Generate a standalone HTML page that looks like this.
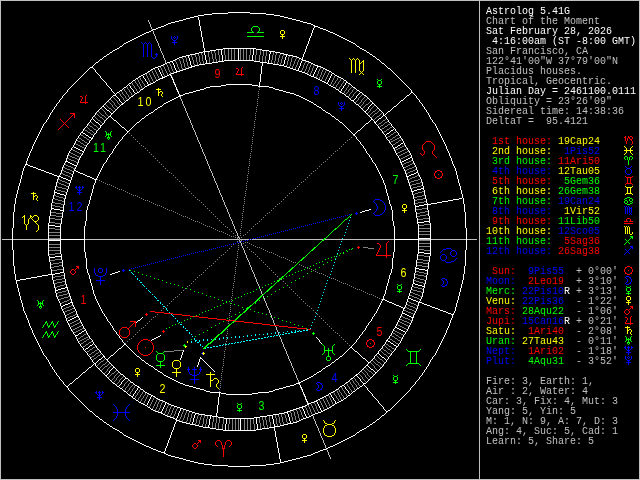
<!DOCTYPE html>
<html><head><meta charset="utf-8"><title>Astrolog 5.41G</title>
<style>
html,body{margin:0;padding:0;background:#000;}
body{width:640px;height:480px;position:relative;overflow:hidden;}
svg{position:absolute;left:0;top:0;will-change:transform;}
path{fill:none;stroke-width:1;shape-rendering:crispEdges;}
#side{position:absolute;left:0;top:0;width:640px;height:480px;will-change:transform;}
.t{position:absolute;left:486px;margin:0;white-space:pre;font:10px/10px "Liberation Mono",monospace;height:10px;color:#c0c0c0;transform:scaleY(1.06);transform-origin:0 0;}
.h{font:12.6px "Liberation Sans",sans-serif;text-anchor:middle;}
.cw{color:#ffffff}
.cl{color:#c0c0c0}
.cr{color:#ff0000}
.cy{color:#ffff00}
.cG{color:#00ff00}
.cb{color:#0000ff}
</style></head><body>
<svg width="640" height="480" viewBox="0 0 640 480"><g transform="translate(0,0.5)">
<path stroke="#ffffff" d="M228 12h22M212 13h16M250 13h16M204 14h8M266 14h8M198 15h6M274 15h6M194 16h4M280 16h4M190 17h4M198 17h1M284 17h4M186 18h4M198 18h1M288 18h4M183 19h3M198 19h1M292 19h4M179 20h4M199 20h1M296 20h4M175 21h4M199 21h1M300 21h3M171 22h4M199 22h1M303 22h4M168 23h3M199 23h1M307 23h4M166 24h2M199 24h1M311 24h2M164 25h2M199 25h1M313 25h2M161 26h3M200 26h1M314 26h4M158 27h3M200 27h1M314 27h1M318 27h2M156 28h2M200 28h1M313 28h1M320 28h3M153 29h3M200 29h1M313 29h1M323 29h3M151 30h2M200 30h1M312 30h1M326 30h2M149 31h2M201 31h1M312 31h1M328 31h2M146 32h3M201 32h1M312 32h1M330 32h3M144 33h2M201 33h1M311 33h1M333 33h2M142 34h2M201 34h1M311 34h1M335 34h2M140 35h2M201 35h1M311 35h1M337 35h2M138 36h2M201 36h1M310 36h1M339 36h2M136 37h2M202 37h1M310 37h1M341 37h2M134 38h2M202 38h1M309 38h1M343 38h2M132 39h2M202 39h1M309 39h1M345 39h2M130 40h2M202 40h1M309 40h1M347 40h2M128 41h2M202 41h1M308 41h1M349 41h2M126 42h2M203 42h1M308 42h1M351 42h2M124 43h2M203 43h1M308 43h1M353 43h2M123 44h1M203 44h1M307 44h1M355 44h1M122 45h1M203 45h1M307 45h1M356 45h1M120 46h2M203 46h1M306 46h1M357 46h2M119 47h1M203 47h1M306 47h1M359 47h1M117 48h2M204 48h1M223 48h33M306 48h1M360 48h2M115 49h2M204 49h1M216 49h7M238 49h1M253 49h1M256 49h6M305 49h1M362 49h2M113 50h2M204 50h1M210 50h6M221 50h1M238 50h1M253 50h1M262 50h7M305 50h1M364 50h2M112 51h1M203 51h7M221 51h1M238 51h1M253 51h1M269 51h6M305 51h1M366 51h1M110 52h2M199 52h4M204 52h1M221 52h1M238 52h1M253 52h1M270 52h1M275 52h5M304 52h1M367 52h2M109 53h1M195 53h4M204 53h1M221 53h1M238 53h1M253 53h1M270 53h1M280 53h4M304 53h1M369 53h1M107 54h2M190 54h5M204 54h1M221 54h1M238 54h1M253 54h1M269 54h1M284 54h4M303 54h1M370 54h2M106 55h1M186 55h4M205 55h1M222 55h1M238 55h1M252 55h1M269 55h1M286 55h1M288 55h5M303 55h1M372 55h1M104 56h2M182 56h4M188 56h1M205 56h1M222 56h1M238 56h1M252 56h1M269 56h1M286 56h1M293 56h4M303 56h1M373 56h2M103 57h1M179 57h3M188 57h1M205 57h1M222 57h1M238 57h1M252 57h1M269 57h1M285 57h1M297 57h2M302 57h1M375 57h1M102 58h1M177 58h2M189 58h1M205 58h1M222 58h1M238 58h1M252 58h1M269 58h1M285 58h1M299 58h2M302 58h1M376 58h1M100 59h2M175 59h2M189 59h1M205 59h1M222 59h1M238 59h1M252 59h1M269 59h1M285 59h1M301 59h2M377 59h2M99 60h1M173 60h2M189 60h1M206 60h1M222 60h1M224 60h30M268 60h1M284 60h1M302 60h4M379 60h1M98 61h1M170 61h3M190 61h1M206 61h1M218 61h6M254 61h6M268 61h1M284 61h1M301 61h1M306 61h3M380 61h1M96 62h2M167 62h3M172 62h1M190 62h1M206 62h1M212 62h6M260 62h7M268 62h1M284 62h1M301 62h1M309 62h2M381 62h1M95 63h1M165 63h2M173 63h1M190 63h1M205 63h7M262 63h1M267 63h6M284 63h1M300 63h1M311 63h2M382 63h2M94 64h1M163 64h2M173 64h1M190 64h1M199 64h6M262 64h1M273 64h6M283 64h1M300 64h1M313 64h2M384 64h1M93 65h1M161 65h2M174 65h1M191 65h1M195 65h4M262 65h1M279 65h5M300 65h1M315 65h3M385 65h1M92 66h1M158 66h3M174 66h1M191 66h4M261 66h1M284 66h3M299 66h1M317 66h4M386 66h1M90 67h3M155 67h3M174 67h1M189 67h3M261 67h1M287 67h3M299 67h1M317 67h1M321 67h2M387 67h1M89 68h1M93 68h1M153 68h2M158 68h1M175 68h1M186 68h3M261 68h1M290 68h3M298 68h1M316 68h1M323 68h2M388 68h2M88 69h1M94 69h1M151 69h2M158 69h1M175 69h1M183 69h3M261 69h1M293 69h3M298 69h1M316 69h1M325 69h2M390 69h1M87 70h1M95 70h1M150 70h1M159 70h1M176 70h1M180 70h3M261 70h1M296 70h3M315 70h1M327 70h2M391 70h1M86 71h1M95 71h1M148 71h2M159 71h1M176 71h4M261 71h1M299 71h3M315 71h1M329 71h2M392 71h1M85 72h1M96 72h1M147 72h1M160 72h1M174 72h3M261 72h1M302 72h3M314 72h1M331 72h1M393 72h1M84 73h1M97 73h1M145 73h2M160 73h1M171 73h3M261 73h1M305 73h2M314 73h1M332 73h2M394 73h1M83 74h1M98 74h1M143 74h2M161 74h1M169 74h2M260 74h1M307 74h2M313 74h1M331 74h1M334 74h1M395 74h1M82 75h1M99 75h1M141 75h2M161 75h1M167 75h2M170 75h1M260 75h1M309 75h2M313 75h1M331 75h1M335 75h2M396 75h1M81 76h1M100 76h1M139 76h2M143 76h1M162 76h1M165 76h2M171 76h1M260 76h1M311 76h3M330 76h1M337 76h2M397 76h1M80 77h1M100 77h1M138 77h1M143 77h1M162 77h3M171 77h1M260 77h1M314 77h2M330 77h1M339 77h2M398 77h1M79 78h1M101 78h1M136 78h2M144 78h1M160 78h3M172 78h1M260 78h1M316 78h2M329 78h1M341 78h2M399 78h1M78 79h1M102 79h1M135 79h1M145 79h1M158 79h2M172 79h1M260 79h1M318 79h2M329 79h1M343 79h1M400 79h1M77 80h1M103 80h1M133 80h2M145 80h1M156 80h2M173 80h1M260 80h1M320 80h2M328 80h1M344 80h2M401 80h1M76 81h1M104 81h1M132 81h1M146 81h1M155 81h1M173 81h1M260 81h1M322 81h2M328 81h1M346 81h1M402 81h1M75 82h1M105 82h1M131 82h1M147 82h1M153 82h2M173 82h1M259 82h1M324 82h2M327 82h1M346 82h2M403 82h1M74 83h1M106 83h1M129 83h2M147 83h1M151 83h2M174 83h1M259 83h1M326 83h2M345 83h1M348 83h2M404 83h1M73 84h1M106 84h1M128 84h1M148 84h3M174 84h1M226 84h26M259 84h1M328 84h1M345 84h1M350 84h1M405 84h1M72 85h1M107 85h1M127 85h1M129 85h1M147 85h2M175 85h1M221 85h5M252 85h6M259 85h1M329 85h2M344 85h1M351 85h1M406 85h1M71 86h1M108 86h1M126 86h1M130 86h1M145 86h2M175 86h1M210 86h11M258 86h11M331 86h2M343 86h1M352 86h1M407 86h1M70 87h1M109 87h1M124 87h2M130 87h1M144 87h1M176 87h1M206 87h4M269 87h4M333 87h2M343 87h1M353 87h2M408 87h1M69 88h1M110 88h1M123 88h1M131 88h1M143 88h1M176 88h1M204 88h2M273 88h2M335 88h1M342 88h1M355 88h1M409 88h1M68 89h1M111 89h1M122 89h1M132 89h1M141 89h2M176 89h1M200 89h4M275 89h4M336 89h2M341 89h1M356 89h1M410 89h1M67 90h1M111 90h1M120 90h2M133 90h1M140 90h1M177 90h1M196 90h4M279 90h4M338 90h1M341 90h1M357 90h2M411 90h1M67 91h1M112 91h1M119 91h1M133 91h1M139 91h1M177 91h1M193 91h3M283 91h3M339 91h2M359 91h1M411 91h1M66 92h1M113 92h1M117 92h2M134 92h1M137 92h2M178 92h1M189 92h4M286 92h4M340 92h2M360 92h2M411 92h2M65 93h1M114 93h1M116 93h1M135 93h2M178 93h1M185 93h4M290 93h4M342 93h2M359 93h1M362 93h1M410 93h1M413 93h1M64 94h1M115 94h1M134 94h1M179 94h1M183 94h2M294 94h2M344 94h1M358 94h1M363 94h1M409 94h1M414 94h1M63 95h1M113 95h3M133 95h1M179 95h4M296 95h3M345 95h1M357 95h1M364 95h2M407 95h2M415 95h1M62 96h1M112 96h1M116 96h1M131 96h2M178 96h2M299 96h2M346 96h2M356 96h1M366 96h1M406 96h1M416 96h1M62 97h1M111 97h1M117 97h1M130 97h1M176 97h2M301 97h2M348 97h1M356 97h1M367 97h1M405 97h1M416 97h1M61 98h1M110 98h1M118 98h1M129 98h1M174 98h2M303 98h2M349 98h1M355 98h1M368 98h1M404 98h1M417 98h1M60 99h1M109 99h1M119 99h1M128 99h1M172 99h2M305 99h2M350 99h1M354 99h1M369 99h1M403 99h1M418 99h1M59 100h1M108 100h1M119 100h1M126 100h2M170 100h2M307 100h2M351 100h3M370 100h1M401 100h2M419 100h1M59 101h1M107 101h1M120 101h1M125 101h1M168 101h2M309 101h2M353 101h1M371 101h1M400 101h1M419 101h1M58 102h1M106 102h1M121 102h1M124 102h1M166 102h2M311 102h2M354 102h1M372 102h1M399 102h1M420 102h1M57 103h1M105 103h1M122 103h2M164 103h2M313 103h1M355 103h1M372 103h2M398 103h1M421 103h1M56 104h1M104 104h1M121 104h2M163 104h1M314 104h2M356 104h2M371 104h1M374 104h1M397 104h1M422 104h1M56 105h1M103 105h1M120 105h1M162 105h1M316 105h1M358 105h1M370 105h1M375 105h1M396 105h1M422 105h1M55 106h1M102 106h2M119 106h1M160 106h2M317 106h2M359 106h1M369 106h1M376 106h1M394 106h2M423 106h1M54 107h1M101 107h1M104 107h1M118 107h1M158 107h2M319 107h2M360 107h1M368 107h1M377 107h1M393 107h1M424 107h1M54 108h1M100 108h1M105 108h1M117 108h1M157 108h1M321 108h1M361 108h1M368 108h1M378 108h1M392 108h1M424 108h1M53 109h1M99 109h1M106 109h1M116 109h1M155 109h2M322 109h1M362 109h1M367 109h1M379 109h1M391 109h1M425 109h1M52 110h1M98 110h1M107 110h2M115 110h1M154 110h1M323 110h2M363 110h1M366 110h1M380 110h1M390 110h1M426 110h1M52 111h1M97 111h1M109 111h1M114 111h1M153 111h1M325 111h1M364 111h2M381 111h1M388 111h2M426 111h1M51 112h1M96 112h1M110 112h1M113 112h1M151 112h2M326 112h2M365 112h1M382 112h1M387 112h1M427 112h1M50 113h1M95 113h1M111 113h2M149 113h2M328 113h2M366 113h1M383 113h1M386 113h1M428 113h1M50 114h1M95 114h1M111 114h1M148 114h1M330 114h1M367 114h1M383 114h1M385 114h1M428 114h1M49 115h1M94 115h1M110 115h1M146 115h2M331 115h1M368 115h1M383 115h2M429 115h1M49 116h1M93 116h1M109 116h2M145 116h1M332 116h2M369 116h1M382 116h1M385 116h1M429 116h1M48 117h1M92 117h1M108 117h1M111 117h1M144 117h1M334 117h1M370 117h1M381 117h1M386 117h1M430 117h1M48 118h1M92 118h1M107 118h1M112 118h1M142 118h2M335 118h1M371 118h1M379 118h2M386 118h1M430 118h1M47 119h1M91 119h1M93 119h1M106 119h1M113 119h1M141 119h1M336 119h2M371 119h2M378 119h1M387 119h1M431 119h1M46 120h1M90 120h1M94 120h1M105 120h1M114 120h2M140 120h1M338 120h1M370 120h1M373 120h1M377 120h1M388 120h1M432 120h1M46 121h1M90 121h1M95 121h1M104 121h1M116 121h1M139 121h1M339 121h1M369 121h1M374 121h1M376 121h1M388 121h1M432 121h1M45 122h1M89 122h1M96 122h2M104 122h1M117 122h1M137 122h2M340 122h2M368 122h1M374 122h2M389 122h1M433 122h1M44 123h1M88 123h1M98 123h1M103 123h1M118 123h1M136 123h1M342 123h1M366 123h2M375 123h1M390 123h1M434 123h1M43 124h1M87 124h1M99 124h1M102 124h1M119 124h1M135 124h1M343 124h1M365 124h1M376 124h1M391 124h1M435 124h1M43 125h1M87 125h1M100 125h2M120 125h1M134 125h1M344 125h1M364 125h1M377 125h1M391 125h1M435 125h1M42 126h1M86 126h1M100 126h1M121 126h1M133 126h1M345 126h1M363 126h1M378 126h1M392 126h1M436 126h1M42 127h1M85 127h1M100 127h1M122 127h2M132 127h1M346 127h1M362 127h1M378 127h1M393 127h1M436 127h1M41 128h1M84 128h1M99 128h1M124 128h1M131 128h1M347 128h1M361 128h1M379 128h1M394 128h1M437 128h1M41 129h1M83 129h1M98 129h1M125 129h1M130 129h1M348 129h1M360 129h1M380 129h1M393 129h1M395 129h1M437 129h1M40 130h1M83 130h1M97 130h1M126 130h1M129 130h1M349 130h1M358 130h2M381 130h1M391 130h2M395 130h1M438 130h1M40 131h1M82 131h1M96 131h1M127 131h2M350 131h1M357 131h1M382 131h1M390 131h1M396 131h1M438 131h1M39 132h1M81 132h2M96 132h1M127 132h1M351 132h1M356 132h1M382 132h1M389 132h1M397 132h1M439 132h1M39 133h1M80 133h1M83 133h2M95 133h1M126 133h1M352 133h1M355 133h1M383 133h1M387 133h2M398 133h1M439 133h1M38 134h1M80 134h1M85 134h1M94 134h1M125 134h1M353 134h2M384 134h1M386 134h1M398 134h1M440 134h1M38 135h1M79 135h1M86 135h2M93 135h1M124 135h1M354 135h1M385 135h1M399 135h1M440 135h1M37 136h1M78 136h1M88 136h1M93 136h1M123 136h1M355 136h1M385 136h1M400 136h1M441 136h1M37 137h1M78 137h1M89 137h2M92 137h1M122 137h1M356 137h1M386 137h1M400 137h1M441 137h1M36 138h1M77 138h1M91 138h2M122 138h1M356 138h1M386 138h1M401 138h1M442 138h1M36 139h1M76 139h1M91 139h1M121 139h1M357 139h1M387 139h1M402 139h1M442 139h1M35 140h1M76 140h1M90 140h1M120 140h1M358 140h1M388 140h1M402 140h1M443 140h1M35 141h1M75 141h1M89 141h1M119 141h1M359 141h1M389 141h1M403 141h1M443 141h1M34 142h1M75 142h1M89 142h1M118 142h1M360 142h1M389 142h1M403 142h1M444 142h1M34 143h1M74 143h1M88 143h1M118 143h1M360 143h1M390 143h1M401 143h2M404 143h1M444 143h1M33 144h1M74 144h1M87 144h1M117 144h1M361 144h1M391 144h1M400 144h1M404 144h1M445 144h1M33 145h1M73 145h1M86 145h1M116 145h1M362 145h1M392 145h1M398 145h2M405 145h1M445 145h1M32 146h1M73 146h1M86 146h1M115 146h1M363 146h1M392 146h1M397 146h1M405 146h1M446 146h1M32 147h1M72 147h1M74 147h2M85 147h1M115 147h1M363 147h1M393 147h1M395 147h2M406 147h1M446 147h1M32 148h1M71 148h1M76 148h2M85 148h1M114 148h1M364 148h1M393 148h2M407 148h1M446 148h1M31 149h1M71 149h1M78 149h2M84 149h1M113 149h1M365 149h1M394 149h1M407 149h1M447 149h1M31 150h1M70 150h1M80 150h2M84 150h1M113 150h1M365 150h1M394 150h1M408 150h1M447 150h1M30 151h1M69 151h1M82 151h2M112 151h1M366 151h1M395 151h1M409 151h1M448 151h1M30 152h1M69 152h1M83 152h1M112 152h1M366 152h1M395 152h1M409 152h1M448 152h1M29 153h1M68 153h1M82 153h1M111 153h1M367 153h1M396 153h1M410 153h1M449 153h1M29 154h1M68 154h1M82 154h1M110 154h1M368 154h1M396 154h1M410 154h1M449 154h1M29 155h1M67 155h1M81 155h1M109 155h1M369 155h1M397 155h1M411 155h1M449 155h1M28 156h1M67 156h1M80 156h1M109 156h1M369 156h1M398 156h1M411 156h1M450 156h1M28 157h1M67 157h1M80 157h1M108 157h1M370 157h1M398 157h1M410 157h2M450 157h1M27 158h1M66 158h1M79 158h1M107 158h1M371 158h1M399 158h1M408 158h2M412 158h1M451 158h1M27 159h1M66 159h1M79 159h1M107 159h1M371 159h1M399 159h1M406 159h2M412 159h1M451 159h1M27 160h1M66 160h1M78 160h1M106 160h1M372 160h1M400 160h1M404 160h2M412 160h1M451 160h1M26 161h1M65 161h3M78 161h1M106 161h1M372 161h1M400 161h1M402 161h2M413 161h1M452 161h1M26 162h1M65 162h1M68 162h2M78 162h1M105 162h1M373 162h1M400 162h2M413 162h1M452 162h1M26 163h1M64 163h1M70 163h2M77 163h1M104 163h1M374 163h1M401 163h1M414 163h1M452 163h1M25 164h3M64 164h1M72 164h2M77 164h1M103 164h1M375 164h1M401 164h1M414 164h1M453 164h1M25 165h1M28 165h2M63 165h1M74 165h3M103 165h1M375 165h1M402 165h1M415 165h1M453 165h1M24 166h1M30 166h3M63 166h1M76 166h1M102 166h1M376 166h1M402 166h1M415 166h1M454 166h1M24 167h1M33 167h3M62 167h1M75 167h1M102 167h1M376 167h1M403 167h1M416 167h1M454 167h1M23 168h1M36 168h2M62 168h1M75 168h1M101 168h1M377 168h1M403 168h1M416 168h1M455 168h1M23 169h1M38 169h3M62 169h1M74 169h1M101 169h1M377 169h1M404 169h1M416 169h1M455 169h1M23 170h1M41 170h3M61 170h1M74 170h2M100 170h1M378 170h1M404 170h1M417 170h1M455 170h1M22 171h1M44 171h2M61 171h1M73 171h1M76 171h2M100 171h1M378 171h1M405 171h1M417 171h1M456 171h1M22 172h1M46 172h3M61 172h1M73 172h1M78 172h2M99 172h1M379 172h1M405 172h1M416 172h2M456 172h1M22 173h1M49 173h3M60 173h1M73 173h1M80 173h3M99 173h1M379 173h1M405 173h1M414 173h2M418 173h1M456 173h1M22 174h1M52 174h2M60 174h1M72 174h1M83 174h2M98 174h1M380 174h1M406 174h1M411 174h3M418 174h1M456 174h1M21 175h1M54 175h3M59 175h1M72 175h1M85 175h2M98 175h1M380 175h1M406 175h1M409 175h2M419 175h1M457 175h1M21 176h1M57 176h4M72 176h1M87 176h3M97 176h1M381 176h1M406 176h3M419 176h1M457 176h1M21 177h1M58 177h1M61 177h2M71 177h1M90 177h2M97 177h1M381 177h1M407 177h1M420 177h1M457 177h1M21 178h1M58 178h1M63 178h3M71 178h1M92 178h2M96 178h1M382 178h1M407 178h1M420 178h1M457 178h1M20 179h1M57 179h1M66 179h2M71 179h1M94 179h3M382 179h1M407 179h1M421 179h1M458 179h1M20 180h1M57 180h1M68 180h3M95 180h1M383 180h1M408 180h1M421 180h1M458 180h1M20 181h1M57 181h1M70 181h1M95 181h1M383 181h1M408 181h1M421 181h1M458 181h1M20 182h1M56 182h1M70 182h1M95 182h1M383 182h1M408 182h1M422 182h1M458 182h1M19 183h1M56 183h1M69 183h1M94 183h1M384 183h1M409 183h1M422 183h1M459 183h1M19 184h1M56 184h1M69 184h1M94 184h1M384 184h1M409 184h1M422 184h1M459 184h1M19 185h1M56 185h1M69 185h1M93 185h1M385 185h1M409 185h1M422 185h1M459 185h1M18 186h1M55 186h1M68 186h1M93 186h1M385 186h1M410 186h1M423 186h1M460 186h1M18 187h1M55 187h1M68 187h1M93 187h1M385 187h1M410 187h1M423 187h1M460 187h1M18 188h1M55 188h1M68 188h1M93 188h1M385 188h1M410 188h1M421 188h3M460 188h1M18 189h1M55 189h1M67 189h1M92 189h1M386 189h1M411 189h1M417 189h4M423 189h1M460 189h1M17 190h1M54 190h1M67 190h1M92 190h1M386 190h1M411 190h1M414 190h3M424 190h1M461 190h1M17 191h1M54 191h1M67 191h1M92 191h1M386 191h1M411 191h3M424 191h1M461 191h1M17 192h1M54 192h3M66 192h1M92 192h1M386 192h1M412 192h1M424 192h1M461 192h1M17 193h1M54 193h1M57 193h3M66 193h1M91 193h1M387 193h1M412 193h1M424 193h1M461 193h1M16 194h1M54 194h1M60 194h4M66 194h1M91 194h1M387 194h1M412 194h1M424 194h1M462 194h1M16 195h1M53 195h1M64 195h2M91 195h1M387 195h1M413 195h1M425 195h1M462 195h1M16 196h1M53 196h1M65 196h1M90 196h1M388 196h1M413 196h1M425 196h1M462 196h1M16 197h1M53 197h1M65 197h1M90 197h1M388 197h1M413 197h1M425 197h1M462 197h1M15 198h1M53 198h1M65 198h1M90 198h1M388 198h1M413 198h1M425 198h1M459 198h3M463 198h1M15 199h1M52 199h1M64 199h1M90 199h1M388 199h1M414 199h1M426 199h1M453 199h6M463 199h1M15 200h1M52 200h1M64 200h1M89 200h1M389 200h1M414 200h1M426 200h1M448 200h5M463 200h1M15 201h1M52 201h1M64 201h1M89 201h1M389 201h1M414 201h1M426 201h1M442 201h6M463 201h1M15 202h1M52 202h1M64 202h1M89 202h1M389 202h1M414 202h1M426 202h1M437 202h5M463 202h1M15 203h1M51 203h1M64 203h1M89 203h1M389 203h1M414 203h1M427 203h1M431 203h6M463 203h1M14 204h1M51 204h1M64 204h1M88 204h1M390 204h1M414 204h1M424 204h7M464 204h1M14 205h1M51 205h1M63 205h1M88 205h1M390 205h1M415 205h1M419 205h5M427 205h1M464 205h1M14 206h1M51 206h1M63 206h1M87 206h1M391 206h1M415 206h4M427 206h1M464 206h1M14 207h1M51 207h1M63 207h1M87 207h1M391 207h1M415 207h1M427 207h1M464 207h1M14 208h1M51 208h3M63 208h1M87 208h1M391 208h1M415 208h1M427 208h1M464 208h1M14 209h1M51 209h1M54 209h6M63 209h1M87 209h1M369 209h2M391 209h1M415 209h1M427 209h1M464 209h1M14 210h1M50 210h1M60 210h4M86 210h1M365 210h4M392 210h1M415 210h1M428 210h1M464 210h1M14 211h1M50 211h1M63 211h1M86 211h1M362 211h3M392 211h1M415 211h1M428 211h1M464 211h1M13 212h1M50 212h1M62 212h1M86 212h1M360 212h2M392 212h1M416 212h1M428 212h1M465 212h1M13 213h1M50 213h1M62 213h1M86 213h1M392 213h1M416 213h1M428 213h1M465 213h1M13 214h1M50 214h1M62 214h1M86 214h1M392 214h1M416 214h1M428 214h1M465 214h1M13 215h1M50 215h1M62 215h1M86 215h1M392 215h1M416 215h1M428 215h1M465 215h1M13 216h1M49 216h1M62 216h1M86 216h1M392 216h1M416 216h1M429 216h1M465 216h1M13 217h1M49 217h1M62 217h1M86 217h1M392 217h1M416 217h1M429 217h1M465 217h1M13 218h1M49 218h1M61 218h1M86 218h1M392 218h1M417 218h1M429 218h1M465 218h1M13 219h1M49 219h1M61 219h1M86 219h1M392 219h1M417 219h1M429 219h1M465 219h1M13 220h1M49 220h1M61 220h1M86 220h1M392 220h1M417 220h1M429 220h1M465 220h1M13 221h1M49 221h1M61 221h1M85 221h1M393 221h1M417 221h1M424 221h6M465 221h1M13 222h1M49 222h1M61 222h1M85 222h1M393 222h1M417 222h7M429 222h1M465 222h1M13 223h1M48 223h1M61 223h1M85 223h1M393 223h1M417 223h1M430 223h1M465 223h1M13 224h1M48 224h1M60 224h1M85 224h1M393 224h1M418 224h1M430 224h1M465 224h1M13 225h1M48 225h7M60 225h1M85 225h1M393 225h1M418 225h1M430 225h1M465 225h1M13 226h1M48 226h1M55 226h6M84 226h1M394 226h1M418 226h1M430 226h1M465 226h1M13 227h1M48 227h1M60 227h1M84 227h1M394 227h1M418 227h1M430 227h1M465 227h1M12 228h1M48 228h1M60 228h1M84 228h1M394 228h1M418 228h1M430 228h1M466 228h1M12 229h1M48 229h1M60 229h1M84 229h1M394 229h1M418 229h1M430 229h1M466 229h1M12 230h1M48 230h1M60 230h1M84 230h1M394 230h1M418 230h1M430 230h1M466 230h1M12 231h1M48 231h1M60 231h1M84 231h1M394 231h1M418 231h1M430 231h1M466 231h1M12 232h1M48 232h1M60 232h1M84 232h1M394 232h1M418 232h1M430 232h1M466 232h1M12 233h1M48 233h1M60 233h1M84 233h1M394 233h1M418 233h1M430 233h1M466 233h1M12 234h1M48 234h1M60 234h1M84 234h1M394 234h1M418 234h1M430 234h1M466 234h1M12 235h1M48 235h1M60 235h1M84 235h1M394 235h1M418 235h1M430 235h1M466 235h1M12 236h1M48 236h1M60 236h1M84 236h1M394 236h1M418 236h1M430 236h1M466 236h1M12 237h1M48 237h1M60 237h1M84 237h1M394 237h1M418 237h1M430 237h1M466 237h1M12 238h1M48 238h1M60 238h1M84 238h1M394 238h1M418 238h13M466 238h1M12 239h1M48 239h1M60 239h25M394 239h25M430 239h1M466 239h1M12 240h1M48 240h13M84 240h1M394 240h1M418 240h1M430 240h1M466 240h1M12 241h1M48 241h1M60 241h1M84 241h1M394 241h1M418 241h1M430 241h1M466 241h1M12 242h1M48 242h1M60 242h1M84 242h1M394 242h1M418 242h1M430 242h1M466 242h1M12 243h1M48 243h1M60 243h1M84 243h1M394 243h1M418 243h1M430 243h1M466 243h1M12 244h1M48 244h1M60 244h1M84 244h1M394 244h1M418 244h1M430 244h1M466 244h1M12 245h1M48 245h1M60 245h1M84 245h1M394 245h1M418 245h1M430 245h1M466 245h1M12 246h1M48 246h1M60 246h1M84 246h1M394 246h1M418 246h1M430 246h1M466 246h1M12 247h1M48 247h1M60 247h1M84 247h1M394 247h1M418 247h1M430 247h1M466 247h1M12 248h1M48 248h1M60 248h1M84 248h1M394 248h1M418 248h1M430 248h1M466 248h1M12 249h1M48 249h1M60 249h1M84 249h1M394 249h1M418 249h1M430 249h1M466 249h1M13 250h1M48 250h1M60 250h1M84 250h1M394 250h1M418 250h1M430 250h1M465 250h1M13 251h1M48 251h1M60 251h1M84 251h1M394 251h1M418 251h1M430 251h1M465 251h1M13 252h1M48 252h1M60 252h1M85 252h1M393 252h1M418 252h6M430 252h1M465 252h1M13 253h1M48 253h1M60 253h1M85 253h1M393 253h1M418 253h1M424 253h7M465 253h1M13 254h1M48 254h1M61 254h1M85 254h1M393 254h1M417 254h1M430 254h1M465 254h1M13 255h1M48 255h1M61 255h1M85 255h1M393 255h1M417 255h1M430 255h1M465 255h1M13 256h1M49 256h1M55 256h7M85 256h1M393 256h1M417 256h1M429 256h1M465 256h1M13 257h1M49 257h6M61 257h1M85 257h1M393 257h1M417 257h1M429 257h1M465 257h1M13 258h1M49 258h1M61 258h1M86 258h1M392 258h1M417 258h1M429 258h1M465 258h1M13 259h1M49 259h1M61 259h1M86 259h1M392 259h1M417 259h1M429 259h1M465 259h1M13 260h1M49 260h1M62 260h1M86 260h1M392 260h1M416 260h1M429 260h1M465 260h1M13 261h1M49 261h1M62 261h1M86 261h1M392 261h1M416 261h1M429 261h1M465 261h1M13 262h1M50 262h1M62 262h1M86 262h1M392 262h1M416 262h1M428 262h1M465 262h1M13 263h1M50 263h1M62 263h1M86 263h1M392 263h1M416 263h1M428 263h1M465 263h1M13 264h1M50 264h1M62 264h1M86 264h1M392 264h1M416 264h1M428 264h1M465 264h1M13 265h1M50 265h1M62 265h1M86 265h1M392 265h1M416 265h1M428 265h1M465 265h1M14 266h1M50 266h1M62 266h1M86 266h1M392 266h1M416 266h1M428 266h1M464 266h1M14 267h1M50 267h1M63 267h1M86 267h1M392 267h1M415 267h1M428 267h1M464 267h1M14 268h1M50 268h1M63 268h1M86 268h1M392 268h1M415 268h4M428 268h1M464 268h1M14 269h1M51 269h1M63 269h1M87 269h1M391 269h1M415 269h1M419 269h6M427 269h1M464 269h1M14 270h1M51 270h1M63 270h1M87 270h1M391 270h1M415 270h1M425 270h3M464 270h1M14 271h1M51 271h1M63 271h1M87 271h1M118 271h2M391 271h1M415 271h1M427 271h1M464 271h1M14 272h1M51 272h1M60 272h4M87 272h1M115 272h3M391 272h1M415 272h1M427 272h1M464 272h1M14 273h1M51 273h1M55 273h5M64 273h1M88 273h1M112 273h3M390 273h1M414 273h1M427 273h1M464 273h1M15 274h1M48 274h7M64 274h1M88 274h1M110 274h2M390 274h1M414 274h1M427 274h1M463 274h1M15 275h1M42 275h6M52 275h1M64 275h1M89 275h1M389 275h1M414 275h1M426 275h1M463 275h1M15 276h1M37 276h5M52 276h1M64 276h1M89 276h1M389 276h1M414 276h1M426 276h1M463 276h1M15 277h1M31 277h6M52 277h1M64 277h1M89 277h1M389 277h1M414 277h1M426 277h1M463 277h1M15 278h1M26 278h5M52 278h1M64 278h1M89 278h1M389 278h1M414 278h1M426 278h1M463 278h1M15 279h1M20 279h6M52 279h1M65 279h1M90 279h1M388 279h1M413 279h1M426 279h1M463 279h1M16 280h4M53 280h1M65 280h1M90 280h1M388 280h1M413 280h1M425 280h1M462 280h1M16 281h1M53 281h1M65 281h1M90 281h1M388 281h1M413 281h1M425 281h1M462 281h1M16 282h1M53 282h1M65 282h1M90 282h1M388 282h1M413 282h1M425 282h1M462 282h1M16 283h1M53 283h1M65 283h1M91 283h1M387 283h1M413 283h2M425 283h1M462 283h1M17 284h1M54 284h1M66 284h1M91 284h1M387 284h1M412 284h1M415 284h3M424 284h1M461 284h1M17 285h1M54 285h1M66 285h1M91 285h1M387 285h1M412 285h1M418 285h4M424 285h1M461 285h1M17 286h1M54 286h1M66 286h1M92 286h1M386 286h1M412 286h1M422 286h3M461 286h1M17 287h1M54 287h1M65 287h3M92 287h1M386 287h1M411 287h1M424 287h1M461 287h1M18 288h1M55 288h1M61 288h4M67 288h1M92 288h1M386 288h1M411 288h1M423 288h1M460 288h1M18 289h1M55 289h1M58 289h3M67 289h1M92 289h1M386 289h1M411 289h1M423 289h1M460 289h1M18 290h1M55 290h3M68 290h1M93 290h1M385 290h1M410 290h1M423 290h1M460 290h1M18 291h1M55 291h1M68 291h1M93 291h1M385 291h1M410 291h1M423 291h1M460 291h1M19 292h1M55 292h1M68 292h1M93 292h1M385 292h1M410 292h1M423 292h1M459 292h1M19 293h1M56 293h1M69 293h1M93 293h1M385 293h1M409 293h1M422 293h1M459 293h1M19 294h1M56 294h1M69 294h1M94 294h1M384 294h1M409 294h1M422 294h1M459 294h1M19 295h1M56 295h1M69 295h1M94 295h1M384 295h1M409 295h1M422 295h1M459 295h1M20 296h1M56 296h1M70 296h1M95 296h1M383 296h1M408 296h1M422 296h1M458 296h1M20 297h1M57 297h1M70 297h1M95 297h1M383 297h1M408 297h1M421 297h1M458 297h1M20 298h1M57 298h1M70 298h1M95 298h1M383 298h1M408 298h3M421 298h1M458 298h1M20 299h1M58 299h1M71 299h1M96 299h1M382 299h3M407 299h1M411 299h2M420 299h1M458 299h1M21 300h1M58 300h1M71 300h1M96 300h1M382 300h1M385 300h2M407 300h1M413 300h3M420 300h1M457 300h1M21 301h1M59 301h1M71 301h1M97 301h1M381 301h1M387 301h2M407 301h1M416 301h2M419 301h1M457 301h1M21 302h1M59 302h1M70 302h3M97 302h1M381 302h1M389 302h3M406 302h1M418 302h4M457 302h1M22 303h1M60 303h1M68 303h2M72 303h1M98 303h1M380 303h1M392 303h2M406 303h1M418 303h1M422 303h2M456 303h1M22 304h1M60 304h1M65 304h3M72 304h1M98 304h1M380 304h1M394 304h2M406 304h1M418 304h1M424 304h3M456 304h1M22 305h1M60 305h1M63 305h2M73 305h1M99 305h1M379 305h1M396 305h3M405 305h1M418 305h1M427 305h3M456 305h1M22 306h1M61 306h2M73 306h1M99 306h1M379 306h1M399 306h2M405 306h1M417 306h1M430 306h2M456 306h1M23 307h1M61 307h1M74 307h1M100 307h1M378 307h1M401 307h2M404 307h1M417 307h1M432 307h3M455 307h1M23 308h1M61 308h1M74 308h1M100 308h1M378 308h1M403 308h2M417 308h1M435 308h3M455 308h1M23 309h1M62 309h1M75 309h1M101 309h1M377 309h1M403 309h1M416 309h1M438 309h2M455 309h1M23 310h1M62 310h1M75 310h1M101 310h1M377 310h1M403 310h1M416 310h1M440 310h3M455 310h1M24 311h1M63 311h1M76 311h1M102 311h1M376 311h1M402 311h1M415 311h1M443 311h3M454 311h1M24 312h1M63 312h1M76 312h1M102 312h1M376 312h1M402 312h1M415 312h1M446 312h2M454 312h1M25 313h1M64 313h1M76 313h1M103 313h1M375 313h1M402 313h3M414 313h1M448 313h3M453 313h1M25 314h1M64 314h1M77 314h1M104 314h1M374 314h1M401 314h1M405 314h2M414 314h1M451 314h3M26 315h1M65 315h1M77 315h1M104 315h1M374 315h1M401 315h1M407 315h2M413 315h1M452 315h1M26 316h1M65 316h1M76 316h3M105 316h1M373 316h1M400 316h1M409 316h2M413 316h1M452 316h1M26 317h1M65 317h1M74 317h2M78 317h1M106 317h1M142 317h1M372 317h1M400 317h1M411 317h3M452 317h1M27 318h1M66 318h1M72 318h2M79 318h1M106 318h1M141 318h1M372 318h1M399 318h1M412 318h1M451 318h1M27 319h1M66 319h1M70 319h2M79 319h1M107 319h1M140 319h1M371 319h1M399 319h1M412 319h1M451 319h1M28 320h1M66 320h1M68 320h2M80 320h1M107 320h1M138 320h2M371 320h1M398 320h1M412 320h1M450 320h1M28 321h1M67 321h1M80 321h1M108 321h1M137 321h1M370 321h1M398 321h1M411 321h1M450 321h1M28 322h1M67 322h1M81 322h1M109 322h1M136 322h1M369 322h1M397 322h1M411 322h1M450 322h1M29 323h1M68 323h1M81 323h1M110 323h1M368 323h1M397 323h1M410 323h1M449 323h1M29 324h1M68 324h1M82 324h1M110 324h1M368 324h1M396 324h1M410 324h1M449 324h1M29 325h1M69 325h1M82 325h1M111 325h1M367 325h1M396 325h1M409 325h1M449 325h1M30 326h1M69 326h1M83 326h1M112 326h1M366 326h1M395 326h1M409 326h1M448 326h1M30 327h1M70 327h1M83 327h1M112 327h1M366 327h1M395 327h2M408 327h1M448 327h1M31 328h1M70 328h1M84 328h1M113 328h1M365 328h1M394 328h1M397 328h2M408 328h1M447 328h1M31 329h1M71 329h1M85 329h1M113 329h1M365 329h1M393 329h1M399 329h2M407 329h1M447 329h1M32 330h1M71 330h1M84 330h2M114 330h1M364 330h1M393 330h1M401 330h2M407 330h1M446 330h1M32 331h1M72 331h1M82 331h2M86 331h1M115 331h1M363 331h1M392 331h1M403 331h2M406 331h1M446 331h1M32 332h1M73 332h1M81 332h1M86 332h1M116 332h1M362 332h1M392 332h1M405 332h1M446 332h1M33 333h1M73 333h1M79 333h2M87 333h1M116 333h1M362 333h1M391 333h1M405 333h1M445 333h1M33 334h1M74 334h1M78 334h1M87 334h1M117 334h1M361 334h1M391 334h1M404 334h1M445 334h1M34 335h1M75 335h3M88 335h1M118 335h1M160 335h1M360 335h1M390 335h1M403 335h1M444 335h1M34 336h1M75 336h1M89 336h1M119 336h1M158 336h2M359 336h1M389 336h1M403 336h1M444 336h1M35 337h1M76 337h1M89 337h1M119 337h1M156 337h2M316 337h1M359 337h1M389 337h1M402 337h1M443 337h1M35 338h1M76 338h1M90 338h1M120 338h1M154 338h2M317 338h1M358 338h1M388 338h1M402 338h1M443 338h1M36 339h1M77 339h1M91 339h1M121 339h1M152 339h2M318 339h1M357 339h1M387 339h1M401 339h1M442 339h1M36 340h1M77 340h1M92 340h1M122 340h1M151 340h1M319 340h1M356 340h1M386 340h2M401 340h1M442 340h1M37 341h1M78 341h1M92 341h1M122 341h1M319 341h1M356 341h1M386 341h1M388 341h2M400 341h1M441 341h1M37 342h1M78 342h1M93 342h1M123 342h1M320 342h1M355 342h1M385 342h1M390 342h1M400 342h1M441 342h1M38 343h1M79 343h1M93 343h1M124 343h1M321 343h1M354 343h1M385 343h1M391 343h2M399 343h1M440 343h1M38 344h1M80 344h1M92 344h1M94 344h1M124 344h2M353 344h1M384 344h1M393 344h1M398 344h1M440 344h1M39 345h1M80 345h1M90 345h2M95 345h1M123 345h1M126 345h1M352 345h1M383 345h1M394 345h2M398 345h1M439 345h1M39 346h1M81 346h1M89 346h1M96 346h1M122 346h1M127 346h1M351 346h1M382 346h1M396 346h2M439 346h1M40 347h1M82 347h1M88 347h1M96 347h1M121 347h1M128 347h1M350 347h2M382 347h1M396 347h1M438 347h1M40 348h1M83 348h1M86 348h2M97 348h1M119 348h2M129 348h1M349 348h1M352 348h1M381 348h1M395 348h1M438 348h1M41 349h1M83 349h1M85 349h1M98 349h1M118 349h1M130 349h1M348 349h1M353 349h1M380 349h1M395 349h1M437 349h1M41 350h1M84 350h1M99 350h1M117 350h1M131 350h1M183 350h1M347 350h1M354 350h1M379 350h1M394 350h1M437 350h1M42 351h1M85 351h1M100 351h1M116 351h1M132 351h1M183 351h1M346 351h1M355 351h2M378 351h1M393 351h1M436 351h1M42 352h1M86 352h1M100 352h1M115 352h1M133 352h1M182 352h1M345 352h1M357 352h1M378 352h1M392 352h1M436 352h1M43 353h1M87 353h1M101 353h1M114 353h1M134 353h1M182 353h1M344 353h1M358 353h1M377 353h2M391 353h1M435 353h1M43 354h1M87 354h1M102 354h1M113 354h1M135 354h1M182 354h1M343 354h1M359 354h1M376 354h1M379 354h1M391 354h1M435 354h1M44 355h1M88 355h1M103 355h1M111 355h2M136 355h1M181 355h1M342 355h1M360 355h1M375 355h1M380 355h1M390 355h1M434 355h1M45 356h1M89 356h1M103 356h2M110 356h1M137 356h2M181 356h1M340 356h2M361 356h1M374 356h1M381 356h1M389 356h1M433 356h1M46 357h1M90 357h1M102 357h1M104 357h1M109 357h1M139 357h1M181 357h1M200 357h1M339 357h1M362 357h1M374 357h1M382 357h2M388 357h1M432 357h1M46 358h1M90 358h1M101 358h1M105 358h1M108 358h1M140 358h1M180 358h1M200 358h2M338 358h1M363 358h2M373 358h1M384 358h1M388 358h1M432 358h1M47 359h1M91 359h1M99 359h2M106 359h2M141 359h1M180 359h1M199 359h1M202 359h1M336 359h2M365 359h1M372 359h1M385 359h1M387 359h1M431 359h1M48 360h1M92 360h1M98 360h1M107 360h1M142 360h2M199 360h1M203 360h1M335 360h1M366 360h1M371 360h1M386 360h1M430 360h1M48 361h1M92 361h1M97 361h1M108 361h1M144 361h1M199 361h1M204 361h1M334 361h1M367 361h1M370 361h1M386 361h1M430 361h1M49 362h1M93 362h1M96 362h1M109 362h1M145 362h1M198 362h1M205 362h1M332 362h2M368 362h2M385 362h1M429 362h1M49 363h1M94 363h2M110 363h1M146 363h2M198 363h1M206 363h1M331 363h1M368 363h1M384 363h1M429 363h1M50 364h1M93 364h1M95 364h1M111 364h1M148 364h1M198 364h1M207 364h1M330 364h1M367 364h1M383 364h1M428 364h1M50 365h1M92 365h1M95 365h1M112 365h1M149 365h2M197 365h1M208 365h1M328 365h2M366 365h2M383 365h1M428 365h1M51 366h1M91 366h1M96 366h1M113 366h1M151 366h2M197 366h1M209 366h1M326 366h2M365 366h1M368 366h1M382 366h1M427 366h1M52 367h1M89 367h2M97 367h1M113 367h2M153 367h1M210 367h1M325 367h1M364 367h1M369 367h1M381 367h1M426 367h1M52 368h1M88 368h1M98 368h1M112 368h1M115 368h1M154 368h1M211 368h1M323 368h2M363 368h1M370 368h1M380 368h1M426 368h1M53 369h1M87 369h1M99 369h1M111 369h1M116 369h1M155 369h2M212 369h1M322 369h1M362 369h1M371 369h2M379 369h1M425 369h1M54 370h1M86 370h1M100 370h1M110 370h1M117 370h1M157 370h1M213 370h1M321 370h1M361 370h1M373 370h1M378 370h1M424 370h1M54 371h1M85 371h1M101 371h1M109 371h1M118 371h1M158 371h2M214 371h1M319 371h2M360 371h1M374 371h1M377 371h1M424 371h1M55 372h1M83 372h2M102 372h1M109 372h1M119 372h1M160 372h2M317 372h2M359 372h1M375 372h2M423 372h1M56 373h1M82 373h1M103 373h1M108 373h1M120 373h1M162 373h1M316 373h1M358 373h1M375 373h1M422 373h1M56 374h1M81 374h1M104 374h1M107 374h1M121 374h2M163 374h1M314 374h2M356 374h2M374 374h1M422 374h1M57 375h1M80 375h1M105 375h2M123 375h1M164 375h2M313 375h1M355 375h2M373 375h1M421 375h1M58 376h1M79 376h1M106 376h1M124 376h1M166 376h2M311 376h2M354 376h1M357 376h1M372 376h1M420 376h1M59 377h1M78 377h1M107 377h1M125 377h1M168 377h2M309 377h2M353 377h1M358 377h1M371 377h1M419 377h1M59 378h1M76 378h2M108 378h1M125 378h3M170 378h2M307 378h2M351 378h2M359 378h1M370 378h1M419 378h1M60 379h1M75 379h1M109 379h1M124 379h1M128 379h1M172 379h2M305 379h2M350 379h1M360 379h1M369 379h1M418 379h1M61 380h1M74 380h1M110 380h1M123 380h1M129 380h1M174 380h2M303 380h2M349 380h1M360 380h1M368 380h1M417 380h1M62 381h1M73 381h1M111 381h1M122 381h1M130 381h1M176 381h2M301 381h2M348 381h1M361 381h1M367 381h1M416 381h1M63 382h1M72 382h1M112 382h1M121 382h1M131 382h2M178 382h2M299 382h2M346 382h2M362 382h1M366 382h1M415 382h1M63 383h1M70 383h2M113 383h2M121 383h1M133 383h1M180 383h3M296 383h4M345 383h1M363 383h3M415 383h1M64 384h1M69 384h1M115 384h1M120 384h1M134 384h1M183 384h2M294 384h2M299 384h1M344 384h1M363 384h1M414 384h1M65 385h1M68 385h1M116 385h1M119 385h1M135 385h2M185 385h4M290 385h4M300 385h1M342 385h2M362 385h1M364 385h1M413 385h1M66 386h2M117 386h2M137 386h2M189 386h4M286 386h4M300 386h1M340 386h2M344 386h1M360 386h2M365 386h1M412 386h1M67 387h1M119 387h1M138 387h2M193 387h3M283 387h3M301 387h1M339 387h1M345 387h1M359 387h1M366 387h1M411 387h1M68 388h1M120 388h2M137 388h1M140 388h1M196 388h4M279 388h4M301 388h1M338 388h1M345 388h1M357 388h2M367 388h1M410 388h1M68 389h1M122 389h1M137 389h1M141 389h2M200 389h4M275 389h4M302 389h1M336 389h2M346 389h1M356 389h1M367 389h1M410 389h1M69 390h1M123 390h1M136 390h1M143 390h1M204 390h2M273 390h2M302 390h1M335 390h1M347 390h1M355 390h1M368 390h1M409 390h1M70 391h1M124 391h2M135 391h1M144 391h1M206 391h4M269 391h4M302 391h1M333 391h2M348 391h1M353 391h2M369 391h1M408 391h1M71 392h1M126 392h1M135 392h1M145 392h2M210 392h11M258 392h11M303 392h1M331 392h2M348 392h1M352 392h1M370 392h1M407 392h1M72 393h1M127 393h1M134 393h1M147 393h2M219 393h1M221 393h5M252 393h6M303 393h1M329 393h2M349 393h1M351 393h1M371 393h1M406 393h1M73 394h1M128 394h1M133 394h1M149 394h2M219 394h1M226 394h26M304 394h1M328 394h1M330 394h1M350 394h1M372 394h1M405 394h1M74 395h1M129 395h2M133 395h1M151 395h2M219 395h1M304 395h1M326 395h2M331 395h1M348 395h2M372 395h1M404 395h1M75 396h1M131 396h2M151 396h1M153 396h2M219 396h1M305 396h1M324 396h2M331 396h1M347 396h1M373 396h1M403 396h1M76 397h1M132 397h1M150 397h1M155 397h1M218 397h1M305 397h1M322 397h2M332 397h1M346 397h1M374 397h1M402 397h1M77 398h1M133 398h2M150 398h1M156 398h2M218 398h1M305 398h1M320 398h2M333 398h1M344 398h2M375 398h1M401 398h1M78 399h1M135 399h1M149 399h1M158 399h2M218 399h1M306 399h1M318 399h2M333 399h1M343 399h1M376 399h1M400 399h1M79 400h1M136 400h2M149 400h1M160 400h3M218 400h1M306 400h1M316 400h2M334 400h1M341 400h2M377 400h1M399 400h1M80 401h1M138 401h1M148 401h1M163 401h2M218 401h1M307 401h1M314 401h3M335 401h1M339 401h2M378 401h1M398 401h1M81 402h1M139 402h2M148 402h1M165 402h2M218 402h1M307 402h1M311 402h3M317 402h1M335 402h1M337 402h2M378 402h1M397 402h1M82 403h1M141 403h2M147 403h1M165 403h1M167 403h2M218 403h1M308 403h3M317 403h1M335 403h2M379 403h1M396 403h1M83 404h1M143 404h2M147 404h1M165 404h1M169 404h2M218 404h1M307 404h2M318 404h1M334 404h1M380 404h1M395 404h1M84 405h1M145 405h2M164 405h1M171 405h3M217 405h1M305 405h2M318 405h1M332 405h2M381 405h1M394 405h1M85 406h1M147 406h1M164 406h1M174 406h3M217 406h1M302 406h3M319 406h1M331 406h1M382 406h1M393 406h1M86 407h1M148 407h2M163 407h1M177 407h3M217 407h1M299 407h4M319 407h1M329 407h2M383 407h1M392 407h1M87 408h1M150 408h1M163 408h1M180 408h3M217 408h1M296 408h3M302 408h1M320 408h1M327 408h2M383 408h1M391 408h1M88 409h1M151 409h2M162 409h1M180 409h1M183 409h3M217 409h1M293 409h3M303 409h1M320 409h1M325 409h2M384 409h1M390 409h1M89 410h1M153 410h2M162 410h1M180 410h1M186 410h3M217 410h1M290 410h3M303 410h1M321 410h1M323 410h2M385 410h1M388 410h2M90 411h2M155 411h3M161 411h1M179 411h1M189 411h3M217 411h1M287 411h3M304 411h1M321 411h2M386 411h2M92 412h1M158 412h4M179 412h1M192 412h3M217 412h1M284 412h4M304 412h1M318 412h3M386 412h1M93 413h1M161 413h2M178 413h1M195 413h4M216 413h1M279 413h5M287 413h1M304 413h1M315 413h3M385 413h1M94 414h1M163 414h2M178 414h1M195 414h1M199 414h6M216 414h1M273 414h6M288 414h1M305 414h1M313 414h2M384 414h1M95 415h1M165 415h2M178 415h1M194 415h1M205 415h7M216 415h1M267 415h6M288 415h1M305 415h1M311 415h2M382 415h2M96 416h2M167 416h3M177 416h1M194 416h1M210 416h1M212 416h6M260 416h7M272 416h1M288 416h1M306 416h1M309 416h2M381 416h1M98 417h1M170 417h3M177 417h1M194 417h1M210 417h1M218 417h6M254 417h6M272 417h1M289 417h1M306 417h3M380 417h1M99 418h1M173 418h2M176 418h1M193 418h1M210 418h1M224 418h30M256 418h1M272 418h1M289 418h1M303 418h3M379 418h1M100 419h2M175 419h2M193 419h1M209 419h1M226 419h1M240 419h1M256 419h1M273 419h1M289 419h1M301 419h2M377 419h2M102 420h1M176 420h3M193 420h1M209 420h1M226 420h1M240 420h1M256 420h1M273 420h1M289 420h1M299 420h2M376 420h1M103 421h1M176 421h1M179 421h3M193 421h1M209 421h1M226 421h1M240 421h1M256 421h1M273 421h1M290 421h1M297 421h2M375 421h1M104 422h2M175 422h1M182 422h4M192 422h1M209 422h1M226 422h1M240 422h1M256 422h1M273 422h1M290 422h1M293 422h4M373 422h2M106 423h1M175 423h1M186 423h4M192 423h1M209 423h1M226 423h1M240 423h1M256 423h1M273 423h1M288 423h5M372 423h1M107 424h2M174 424h1M190 424h5M209 424h1M225 424h1M240 424h1M257 424h1M274 424h1M284 424h4M370 424h2M109 425h1M174 425h1M195 425h4M208 425h1M225 425h1M240 425h1M257 425h1M274 425h1M280 425h4M369 425h1M110 426h2M174 426h1M199 426h4M208 426h1M225 426h1M240 426h1M257 426h1M274 426h6M367 426h2M112 427h1M173 427h1M203 427h7M225 427h1M240 427h1M257 427h1M269 427h6M366 427h1M113 428h2M173 428h1M210 428h6M225 428h1M240 428h1M257 428h1M262 428h7M274 428h1M364 428h2M115 429h2M173 429h1M216 429h7M225 429h1M240 429h1M256 429h6M274 429h1M362 429h2M117 430h2M172 430h1M223 430h33M274 430h1M360 430h2M119 431h1M172 431h1M275 431h1M359 431h1M120 432h2M171 432h1M275 432h1M357 432h2M122 433h1M171 433h1M275 433h1M356 433h1M123 434h1M171 434h1M275 434h1M355 434h1M124 435h2M170 435h1M275 435h1M353 435h2M126 436h2M170 436h1M275 436h1M351 436h2M128 437h2M170 437h1M276 437h1M349 437h2M130 438h2M169 438h1M276 438h1M347 438h2M132 439h2M169 439h1M276 439h1M345 439h2M134 440h2M168 440h1M276 440h1M343 440h2M136 441h2M168 441h1M276 441h1M341 441h2M138 442h2M168 442h1M277 442h1M339 442h2M140 443h2M167 443h1M277 443h1M337 443h2M142 444h2M167 444h1M277 444h1M335 444h2M144 445h2M167 445h1M277 445h1M333 445h2M146 446h3M166 446h1M277 446h1M330 446h3M149 447h2M166 447h1M277 447h1M328 447h2M151 448h2M165 448h1M278 448h1M326 448h2M153 449h3M165 449h1M278 449h1M323 449h3M156 450h2M165 450h1M278 450h1M320 450h3M158 451h3M164 451h1M278 451h1M318 451h2M161 452h4M278 452h1M315 452h3M164 453h2M279 453h1M313 453h2M166 454h2M279 454h1M311 454h2M168 455h3M279 455h1M307 455h4M171 456h4M279 456h1M303 456h4M175 457h4M279 457h1M300 457h3M179 458h4M279 458h1M296 458h4M183 459h3M280 459h1M292 459h4M186 460h4M280 460h1M288 460h4M190 461h4M280 461h1M284 461h4M194 462h4M280 462h4M198 463h6M274 463h6M204 464h8M266 464h8M212 465h16M250 465h16M228 466h22"/>
<path stroke="#c0c0c0" d="M0 0h640M0 1h1M479 1h1M639 1h1M0 2h1M479 2h1M639 2h1M0 3h1M479 3h1M639 3h1M0 4h1M479 4h1M639 4h1M0 5h1M479 5h1M639 5h1M0 6h1M479 6h1M639 6h1M0 7h1M479 7h1M639 7h1M0 8h1M479 8h1M639 8h1M0 9h1M479 9h1M639 9h1M0 10h1M479 10h1M639 10h1M0 11h1M479 11h1M639 11h1M0 12h1M479 12h1M639 12h1M0 13h1M479 13h1M639 13h1M0 14h1M479 14h1M639 14h1M0 15h1M479 15h1M639 15h1M0 16h1M479 16h1M639 16h1M0 17h1M479 17h1M639 17h1M0 18h1M479 18h1M639 18h1M0 19h1M479 19h1M639 19h1M0 20h1M148 20h1M479 20h1M639 20h1M0 21h1M148 21h1M479 21h1M639 21h1M0 22h1M149 22h1M479 22h1M639 22h1M0 23h1M149 23h1M479 23h1M639 23h1M0 24h1M150 24h1M479 24h1M639 24h1M0 25h1M150 25h1M479 25h1M639 25h1M0 26h1M150 26h1M479 26h1M639 26h1M0 27h1M151 27h1M479 27h1M639 27h1M0 28h1M151 28h1M479 28h1M639 28h1M0 29h1M152 29h1M479 29h1M639 29h1M0 30h1M479 30h1M639 30h1M0 31h1M153 31h1M479 31h1M639 31h1M0 32h1M153 32h1M479 32h1M639 32h1M0 33h1M153 33h1M479 33h1M639 33h1M0 34h1M154 34h1M479 34h1M639 34h1M0 35h1M154 35h1M479 35h1M639 35h1M0 36h1M155 36h1M479 36h1M639 36h1M0 37h1M155 37h1M479 37h1M639 37h1M0 38h1M155 38h1M479 38h1M639 38h1M0 39h1M156 39h1M479 39h1M639 39h1M0 40h1M156 40h1M479 40h1M639 40h1M0 41h1M157 41h1M479 41h1M639 41h1M0 42h1M157 42h1M479 42h1M639 42h1M0 43h1M158 43h1M479 43h1M639 43h1M0 44h1M158 44h1M479 44h1M639 44h1M0 45h1M158 45h1M479 45h1M639 45h1M0 46h1M159 46h1M479 46h1M639 46h1M0 47h1M159 47h1M479 47h1M639 47h1M0 48h1M160 48h1M479 48h1M639 48h1M0 49h1M160 49h1M479 49h1M639 49h1M0 50h1M160 50h1M479 50h1M639 50h1M0 51h1M161 51h1M479 51h1M639 51h1M0 52h1M161 52h1M479 52h1M639 52h1M0 53h1M162 53h1M479 53h1M639 53h1M0 54h1M162 54h1M479 54h1M639 54h1M0 55h1M163 55h1M479 55h1M639 55h1M0 56h1M163 56h1M479 56h1M639 56h1M0 57h1M163 57h1M479 57h1M639 57h1M0 58h1M164 58h1M479 58h1M639 58h1M0 59h1M164 59h1M479 59h1M639 59h1M0 60h1M165 60h1M479 60h1M639 60h1M0 61h1M165 61h1M479 61h1M639 61h1M0 62h1M165 62h1M479 62h1M639 62h1M0 63h1M479 63h1M639 63h1M0 64h1M479 64h1M639 64h1M0 65h1M479 65h1M639 65h1M0 66h1M479 66h1M639 66h1M0 67h1M479 67h1M639 67h1M0 68h1M479 68h1M639 68h1M0 69h1M479 69h1M639 69h1M0 70h1M479 70h1M639 70h1M0 71h1M479 71h1M639 71h1M0 72h1M479 72h1M639 72h1M0 73h1M479 73h1M639 73h1M0 74h1M479 74h1M639 74h1M0 75h1M171 75h1M479 75h1M639 75h1M0 76h1M479 76h1M639 76h1M0 77h1M172 77h1M479 77h1M639 77h1M0 78h1M479 78h1M639 78h1M0 79h1M173 79h1M479 79h1M639 79h1M0 80h1M479 80h1M639 80h1M0 81h1M479 81h1M639 81h1M0 82h1M174 82h1M479 82h1M639 82h1M0 83h1M479 83h1M639 83h1M0 84h1M175 84h1M479 84h1M639 84h1M0 85h1M479 85h1M639 85h1M0 86h1M479 86h1M639 86h1M0 87h1M479 87h1M639 87h1M0 88h1M479 88h1M639 88h1M0 89h1M177 89h1M479 89h1M639 89h1M0 90h1M479 90h1M639 90h1M0 91h1M178 91h1M479 91h1M639 91h1M0 92h1M479 92h1M639 92h1M0 93h1M479 93h1M639 93h1M0 94h1M479 94h1M639 94h1M0 95h1M479 95h1M639 95h1M0 96h1M180 96h1M479 96h1M639 96h1M0 97h1M180 97h1M479 97h1M639 97h1M0 98h1M180 98h1M479 98h1M639 98h1M0 99h1M181 99h1M479 99h1M639 99h1M0 100h1M181 100h1M479 100h1M639 100h1M0 101h1M182 101h1M479 101h1M639 101h1M0 102h1M182 102h1M479 102h1M639 102h1M0 103h1M182 103h1M479 103h1M639 103h1M0 104h1M183 104h1M479 104h1M639 104h1M0 105h1M183 105h1M479 105h1M639 105h1M0 106h1M184 106h1M479 106h1M639 106h1M0 107h1M184 107h1M479 107h1M639 107h1M0 108h1M185 108h1M479 108h1M639 108h1M0 109h1M185 109h1M479 109h1M639 109h1M0 110h1M185 110h1M479 110h1M639 110h1M0 111h1M186 111h1M479 111h1M639 111h1M0 112h1M186 112h1M479 112h1M639 112h1M0 113h1M187 113h1M479 113h1M639 113h1M0 114h1M187 114h1M479 114h1M639 114h1M0 115h1M187 115h1M479 115h1M639 115h1M0 116h1M188 116h1M479 116h1M639 116h1M0 117h1M188 117h1M479 117h1M639 117h1M0 118h1M189 118h1M479 118h1M639 118h1M0 119h1M189 119h1M479 119h1M639 119h1M0 120h1M190 120h1M479 120h1M639 120h1M0 121h1M190 121h1M479 121h1M639 121h1M0 122h1M190 122h1M479 122h1M639 122h1M0 123h1M191 123h1M479 123h1M639 123h1M0 124h1M191 124h1M479 124h1M639 124h1M0 125h1M192 125h1M479 125h1M639 125h1M0 126h1M192 126h1M479 126h1M639 126h1M0 127h1M192 127h1M479 127h1M639 127h1M0 128h1M193 128h1M479 128h1M639 128h1M0 129h1M193 129h1M479 129h1M639 129h1M0 130h1M194 130h1M479 130h1M639 130h1M0 131h1M194 131h1M479 131h1M639 131h1M0 132h1M195 132h1M479 132h1M639 132h1M0 133h1M195 133h1M479 133h1M639 133h1M0 134h1M195 134h1M479 134h1M639 134h1M0 135h1M196 135h1M479 135h1M639 135h1M0 136h1M196 136h1M479 136h1M639 136h1M0 137h1M197 137h1M479 137h1M639 137h1M0 138h1M197 138h1M479 138h1M639 138h1M0 139h1M197 139h1M479 139h1M639 139h1M0 140h1M198 140h1M479 140h1M639 140h1M0 141h1M198 141h1M479 141h1M639 141h1M0 142h1M199 142h1M479 142h1M639 142h1M0 143h1M199 143h1M479 143h1M639 143h1M0 144h1M200 144h1M479 144h1M639 144h1M0 145h1M200 145h1M479 145h1M639 145h1M0 146h1M200 146h1M479 146h1M639 146h1M0 147h1M201 147h1M479 147h1M639 147h1M0 148h1M201 148h1M479 148h1M639 148h1M0 149h1M202 149h1M479 149h1M639 149h1M0 150h1M202 150h1M479 150h1M639 150h1M0 151h1M202 151h1M479 151h1M639 151h1M0 152h1M203 152h1M479 152h1M639 152h1M0 153h1M203 153h1M479 153h1M639 153h1M0 154h1M204 154h1M479 154h1M639 154h1M0 155h1M204 155h1M479 155h1M639 155h1M0 156h1M205 156h1M479 156h1M639 156h1M0 157h1M205 157h1M479 157h1M639 157h1M0 158h1M205 158h1M479 158h1M639 158h1M0 159h1M206 159h1M479 159h1M639 159h1M0 160h1M206 160h1M479 160h1M639 160h1M0 161h1M207 161h1M479 161h1M639 161h1M0 162h1M207 162h1M479 162h1M639 162h1M0 163h1M207 163h1M479 163h1M639 163h1M0 164h1M208 164h1M479 164h1M639 164h1M0 165h1M208 165h1M479 165h1M639 165h1M0 166h1M209 166h1M479 166h1M639 166h1M0 167h1M209 167h1M479 167h1M639 167h1M0 168h1M209 168h1M479 168h1M639 168h1M0 169h1M210 169h1M479 169h1M639 169h1M0 170h1M210 170h1M479 170h1M639 170h1M0 171h1M211 171h1M479 171h1M639 171h1M0 172h1M211 172h1M479 172h1M639 172h1M0 173h1M212 173h1M479 173h1M639 173h1M0 174h1M212 174h1M479 174h1M639 174h1M0 175h1M212 175h1M479 175h1M639 175h1M0 176h1M213 176h1M479 176h1M639 176h1M0 177h1M213 177h1M479 177h1M639 177h1M0 178h1M214 178h1M479 178h1M639 178h1M0 179h1M214 179h1M479 179h1M639 179h1M0 180h1M214 180h1M479 180h1M639 180h1M0 181h1M215 181h1M479 181h1M639 181h1M0 182h1M215 182h1M479 182h1M639 182h1M0 183h1M216 183h1M479 183h1M639 183h1M0 184h1M216 184h1M479 184h1M639 184h1M0 185h1M217 185h1M479 185h1M639 185h1M0 186h1M217 186h1M479 186h1M639 186h1M0 187h1M217 187h1M479 187h1M639 187h1M0 188h1M218 188h1M479 188h1M639 188h1M0 189h1M218 189h1M479 189h1M639 189h1M0 190h1M219 190h1M479 190h1M639 190h1M0 191h1M219 191h1M479 191h1M639 191h1M0 192h1M219 192h1M479 192h1M639 192h1M0 193h1M220 193h1M479 193h1M639 193h1M0 194h1M220 194h1M479 194h1M639 194h1M0 195h1M221 195h1M479 195h1M639 195h1M0 196h1M221 196h1M479 196h1M639 196h1M0 197h1M222 197h1M479 197h1M639 197h1M0 198h1M222 198h1M479 198h1M639 198h1M0 199h1M222 199h1M479 199h1M639 199h1M0 200h1M223 200h1M479 200h1M639 200h1M0 201h1M223 201h1M479 201h1M639 201h1M0 202h1M224 202h1M479 202h1M639 202h1M0 203h1M224 203h1M479 203h1M639 203h1M0 204h1M224 204h1M479 204h1M639 204h1M0 205h1M225 205h1M479 205h1M639 205h1M0 206h1M225 206h1M479 206h1M639 206h1M0 207h1M226 207h1M479 207h1M639 207h1M0 208h1M226 208h1M479 208h1M639 208h1M0 209h1M227 209h1M479 209h1M639 209h1M0 210h1M227 210h1M479 210h1M639 210h1M0 211h1M227 211h1M479 211h1M639 211h1M0 212h1M228 212h1M479 212h1M639 212h1M0 213h1M228 213h1M479 213h1M639 213h1M0 214h1M229 214h1M479 214h1M639 214h1M0 215h1M229 215h1M479 215h1M639 215h1M0 216h1M229 216h1M479 216h1M639 216h1M0 217h1M230 217h1M479 217h1M639 217h1M0 218h1M230 218h1M479 218h1M639 218h1M0 219h1M231 219h1M479 219h1M639 219h1M0 220h1M231 220h1M479 220h1M639 220h1M0 221h1M232 221h1M479 221h1M639 221h1M0 222h1M232 222h1M479 222h1M639 222h1M0 223h1M232 223h1M479 223h1M639 223h1M0 224h1M233 224h1M479 224h1M639 224h1M0 225h1M233 225h1M479 225h1M639 225h1M0 226h1M234 226h1M479 226h1M639 226h1M0 227h1M234 227h1M479 227h1M639 227h1M0 228h1M234 228h1M479 228h1M639 228h1M0 229h1M235 229h1M479 229h1M639 229h1M0 230h1M235 230h1M479 230h1M639 230h1M0 231h1M236 231h1M479 231h1M639 231h1M0 232h1M236 232h1M479 232h1M639 232h1M0 233h1M237 233h1M479 233h1M639 233h1M0 234h1M237 234h1M479 234h1M639 234h1M0 235h1M237 235h1M479 235h1M639 235h1M0 236h1M238 236h1M479 236h1M639 236h1M0 237h1M238 237h1M479 237h1M639 237h1M0 238h1M239 238h1M479 238h1M639 238h1M0 239h1M2 239h10M13 239h35M49 239h11M85 239h154M240 239h9M250 239h1M252 239h71M325 239h69M419 239h11M431 239h35M467 239h10M479 239h1M639 239h1M0 240h1M239 240h1M479 240h1M639 240h1M0 241h1M240 241h1M479 241h1M639 241h1M0 242h1M240 242h1M479 242h1M639 242h1M0 243h1M241 243h1M479 243h1M639 243h1M0 244h1M241 244h1M479 244h1M639 244h1M0 245h1M241 245h1M479 245h1M639 245h1M0 246h1M242 246h1M479 246h1M639 246h1M0 247h1M242 247h1M479 247h1M639 247h1M0 248h1M243 248h1M479 248h1M639 248h1M0 249h1M243 249h1M479 249h1M639 249h1M0 250h1M244 250h1M479 250h1M639 250h1M0 251h1M244 251h1M479 251h1M639 251h1M0 252h1M244 252h1M479 252h1M639 252h1M0 253h1M245 253h1M479 253h1M639 253h1M0 254h1M245 254h1M479 254h1M639 254h1M0 255h1M246 255h1M479 255h1M639 255h1M0 256h1M246 256h1M479 256h1M639 256h1M0 257h1M246 257h1M479 257h1M639 257h1M0 258h1M247 258h1M479 258h1M639 258h1M0 259h1M247 259h1M479 259h1M639 259h1M0 260h1M248 260h1M479 260h1M639 260h1M0 261h1M248 261h1M479 261h1M639 261h1M0 262h1M249 262h1M479 262h1M639 262h1M0 263h1M249 263h1M479 263h1M639 263h1M0 264h1M249 264h1M479 264h1M639 264h1M0 265h1M250 265h1M479 265h1M639 265h1M0 266h1M250 266h1M479 266h1M639 266h1M0 267h1M251 267h1M479 267h1M639 267h1M0 268h1M251 268h1M479 268h1M639 268h1M0 269h1M251 269h1M479 269h1M639 269h1M0 270h1M252 270h1M479 270h1M639 270h1M0 271h1M252 271h1M479 271h1M639 271h1M0 272h1M253 272h1M479 272h1M639 272h1M0 273h1M253 273h1M479 273h1M639 273h1M0 274h1M254 274h1M479 274h1M639 274h1M0 275h1M254 275h1M479 275h1M639 275h1M0 276h1M254 276h1M479 276h1M639 276h1M0 277h1M255 277h1M479 277h1M639 277h1M0 278h1M255 278h1M479 278h1M639 278h1M0 279h1M256 279h1M479 279h1M639 279h1M0 280h1M256 280h1M479 280h1M639 280h1M0 281h1M256 281h1M479 281h1M639 281h1M0 282h1M257 282h1M479 282h1M639 282h1M0 283h1M257 283h1M479 283h1M639 283h1M0 284h1M258 284h1M479 284h1M639 284h1M0 285h1M258 285h1M479 285h1M639 285h1M0 286h1M259 286h1M479 286h1M639 286h1M0 287h1M259 287h1M479 287h1M639 287h1M0 288h1M479 288h1M639 288h1M0 289h1M260 289h1M479 289h1M639 289h1M0 290h1M260 290h1M479 290h1M639 290h1M0 291h1M261 291h1M479 291h1M639 291h1M0 292h1M261 292h1M479 292h1M639 292h1M0 293h1M261 293h1M479 293h1M639 293h1M0 294h1M262 294h1M479 294h1M639 294h1M0 295h1M479 295h1M639 295h1M0 296h1M263 296h1M479 296h1M639 296h1M0 297h1M263 297h1M479 297h1M639 297h1M0 298h1M264 298h1M479 298h1M639 298h1M0 299h1M264 299h1M479 299h1M639 299h1M0 300h1M264 300h1M479 300h1M639 300h1M0 301h1M265 301h1M479 301h1M639 301h1M0 302h1M265 302h1M479 302h1M639 302h1M0 303h1M266 303h1M479 303h1M639 303h1M0 304h1M266 304h1M479 304h1M639 304h1M0 305h1M266 305h1M479 305h1M639 305h1M0 306h1M267 306h1M479 306h1M639 306h1M0 307h1M267 307h1M479 307h1M639 307h1M0 308h1M268 308h1M479 308h1M639 308h1M0 309h1M268 309h1M479 309h1M639 309h1M0 310h1M269 310h1M479 310h1M639 310h1M0 311h1M269 311h1M479 311h1M639 311h1M0 312h1M269 312h1M479 312h1M639 312h1M0 313h1M270 313h1M479 313h1M639 313h1M0 314h1M270 314h1M479 314h1M639 314h1M0 315h1M271 315h1M479 315h1M639 315h1M0 316h1M271 316h1M479 316h1M639 316h1M0 317h1M271 317h1M479 317h1M639 317h1M0 318h1M272 318h1M479 318h1M639 318h1M0 319h1M272 319h1M479 319h1M639 319h1M0 320h1M273 320h1M479 320h1M639 320h1M0 321h1M273 321h1M479 321h1M639 321h1M0 322h1M273 322h1M479 322h1M639 322h1M0 323h1M274 323h1M479 323h1M639 323h1M0 324h1M274 324h1M479 324h1M639 324h1M0 325h1M479 325h1M639 325h1M0 326h1M275 326h1M479 326h1M639 326h1M0 327h1M276 327h1M479 327h1M639 327h1M0 328h1M276 328h1M479 328h1M639 328h1M0 329h1M276 329h1M479 329h1M639 329h1M0 330h1M277 330h1M479 330h1M639 330h1M0 331h1M277 331h1M479 331h1M639 331h1M0 332h1M278 332h1M479 332h1M639 332h1M0 333h1M278 333h1M479 333h1M639 333h1M0 334h1M278 334h1M479 334h1M639 334h1M0 335h1M479 335h1M639 335h1M0 336h1M279 336h1M479 336h1M639 336h1M0 337h1M280 337h1M479 337h1M639 337h1M0 338h1M280 338h1M479 338h1M639 338h1M0 339h1M281 339h1M479 339h1M639 339h1M0 340h1M281 340h1M479 340h1M639 340h1M0 341h1M281 341h1M479 341h1M639 341h1M0 342h1M282 342h1M479 342h1M639 342h1M0 343h1M282 343h1M479 343h1M639 343h1M0 344h1M283 344h1M479 344h1M639 344h1M0 345h1M283 345h1M479 345h1M639 345h1M0 346h1M283 346h1M479 346h1M639 346h1M0 347h1M284 347h1M479 347h1M639 347h1M0 348h1M284 348h1M479 348h1M639 348h1M0 349h1M285 349h1M479 349h1M639 349h1M0 350h1M285 350h1M479 350h1M639 350h1M0 351h1M286 351h1M479 351h1M639 351h1M0 352h1M286 352h1M479 352h1M639 352h1M0 353h1M286 353h1M479 353h1M639 353h1M0 354h1M287 354h1M479 354h1M639 354h1M0 355h1M287 355h1M479 355h1M639 355h1M0 356h1M288 356h1M479 356h1M639 356h1M0 357h1M288 357h1M479 357h1M639 357h1M0 358h1M288 358h1M479 358h1M639 358h1M0 359h1M289 359h1M479 359h1M639 359h1M0 360h1M289 360h1M479 360h1M639 360h1M0 361h1M290 361h1M479 361h1M639 361h1M0 362h1M290 362h1M479 362h1M639 362h1M0 363h1M291 363h1M479 363h1M639 363h1M0 364h1M291 364h1M479 364h1M639 364h1M0 365h1M291 365h1M479 365h1M639 365h1M0 366h1M292 366h1M479 366h1M639 366h1M0 367h1M292 367h1M479 367h1M639 367h1M0 368h1M293 368h1M479 368h1M639 368h1M0 369h1M293 369h1M479 369h1M639 369h1M0 370h1M293 370h1M479 370h1M639 370h1M0 371h1M294 371h1M479 371h1M639 371h1M0 372h1M294 372h1M479 372h1M639 372h1M0 373h1M295 373h1M479 373h1M639 373h1M0 374h1M295 374h1M479 374h1M639 374h1M0 375h1M296 375h1M479 375h1M639 375h1M0 376h1M296 376h1M479 376h1M639 376h1M0 377h1M296 377h1M479 377h1M639 377h1M0 378h1M297 378h1M479 378h1M639 378h1M0 379h1M297 379h1M479 379h1M639 379h1M0 380h1M298 380h1M479 380h1M639 380h1M0 381h1M298 381h1M479 381h1M639 381h1M0 382h1M298 382h1M479 382h1M639 382h1M0 383h1M479 383h1M639 383h1M0 384h1M479 384h1M639 384h1M0 385h1M479 385h1M639 385h1M0 386h1M479 386h1M639 386h1M0 387h1M300 387h1M479 387h1M639 387h1M0 388h1M479 388h1M639 388h1M0 389h1M301 389h1M479 389h1M639 389h1M0 390h1M479 390h1M639 390h1M0 391h1M479 391h1M639 391h1M0 392h1M479 392h1M639 392h1M0 393h1M479 393h1M639 393h1M0 394h1M303 394h1M479 394h1M639 394h1M0 395h1M479 395h1M639 395h1M0 396h1M304 396h1M479 396h1M639 396h1M0 397h1M479 397h1M639 397h1M0 398h1M479 398h1M639 398h1M0 399h1M305 399h1M479 399h1M639 399h1M0 400h1M479 400h1M639 400h1M0 401h1M306 401h1M479 401h1M639 401h1M0 402h1M479 402h1M639 402h1M0 403h1M307 403h1M479 403h1M639 403h1M0 404h1M479 404h1M639 404h1M0 405h1M479 405h1M639 405h1M0 406h1M479 406h1M639 406h1M0 407h1M479 407h1M639 407h1M0 408h1M479 408h1M639 408h1M0 409h1M479 409h1M639 409h1M0 410h1M479 410h1M639 410h1M0 411h1M479 411h1M639 411h1M0 412h1M479 412h1M639 412h1M0 413h1M479 413h1M639 413h1M0 414h1M479 414h1M639 414h1M0 415h1M479 415h1M639 415h1M0 416h1M313 416h1M479 416h1M639 416h1M0 417h1M313 417h1M479 417h1M639 417h1M0 418h1M313 418h1M479 418h1M639 418h1M0 419h1M314 419h1M479 419h1M639 419h1M0 420h1M314 420h1M479 420h1M639 420h1M0 421h1M315 421h1M479 421h1M639 421h1M0 422h1M315 422h1M479 422h1M639 422h1M0 423h1M315 423h1M479 423h1M639 423h1M0 424h1M316 424h1M479 424h1M639 424h1M0 425h1M316 425h1M479 425h1M639 425h1M0 426h1M317 426h1M479 426h1M639 426h1M0 427h1M317 427h1M479 427h1M639 427h1M0 428h1M318 428h1M479 428h1M639 428h1M0 429h1M318 429h1M479 429h1M639 429h1M0 430h1M318 430h1M479 430h1M639 430h1M0 431h1M319 431h1M479 431h1M639 431h1M0 432h1M319 432h1M479 432h1M639 432h1M0 433h1M320 433h1M479 433h1M639 433h1M0 434h1M320 434h1M479 434h1M639 434h1M0 435h1M320 435h1M479 435h1M639 435h1M0 436h1M321 436h1M479 436h1M639 436h1M0 437h1M321 437h1M479 437h1M639 437h1M0 438h1M322 438h1M479 438h1M639 438h1M0 439h1M322 439h1M479 439h1M639 439h1M0 440h1M323 440h1M479 440h1M639 440h1M0 441h1M323 441h1M479 441h1M639 441h1M0 442h1M323 442h1M479 442h1M639 442h1M0 443h1M324 443h1M479 443h1M639 443h1M0 444h1M324 444h1M479 444h1M639 444h1M0 445h1M325 445h1M479 445h1M639 445h1M0 446h1M325 446h1M479 446h1M639 446h1M0 447h1M325 447h1M479 447h1M639 447h1M0 448h1M479 448h1M639 448h1M0 449h1M326 449h1M479 449h1M639 449h1M0 450h1M327 450h1M479 450h1M639 450h1M0 451h1M327 451h1M479 451h1M639 451h1M0 452h1M328 452h1M479 452h1M639 452h1M0 453h1M328 453h1M479 453h1M639 453h1M0 454h1M328 454h1M479 454h1M639 454h1M0 455h1M329 455h1M479 455h1M639 455h1M0 456h1M329 456h1M479 456h1M639 456h1M0 457h1M330 457h1M479 457h1M639 457h1M0 458h1M330 458h1M479 458h1M639 458h1M0 459h1M479 459h1M639 459h1M0 460h1M479 460h1M639 460h1M0 461h1M479 461h1M639 461h1M0 462h1M479 462h1M639 462h1M0 463h1M479 463h1M639 463h1M0 464h1M479 464h1M639 464h1M0 465h1M479 465h1M639 465h1M0 466h1M479 466h1M639 466h1M0 467h1M479 467h1M639 467h1M0 468h1M479 468h1M639 468h1M0 469h1M479 469h1M639 469h1M0 470h1M479 470h1M639 470h1M0 471h1M479 471h1M639 471h1M0 472h1M479 472h1M639 472h1M0 473h1M479 473h1M639 473h1M0 474h1M479 474h1M639 474h1M0 475h1M479 475h1M639 475h1M0 476h1M479 476h1M639 476h1M0 477h1M479 477h1M639 477h1M0 478h1M479 478h1M639 478h1M0 479h640"/>
<path stroke="#808080" d="M224 49h1M228 49h1M231 49h1M234 49h1M240 49h1M243 49h1M246 49h1M250 49h1M218 50h1M224 50h1M228 50h1M231 50h1M234 50h1M240 50h1M243 50h1M246 50h1M250 50h1M256 50h1M260 50h1M211 51h1M214 51h1M218 51h1M224 51h1M228 51h1M231 51h1M234 51h1M240 51h1M243 51h1M246 51h1M250 51h1M256 51h1M260 51h1M263 51h1M266 51h1M208 52h1M211 52h1M214 52h1M218 52h1M224 52h1M228 52h1M231 52h1M234 52h1M240 52h1M243 52h1M246 52h1M250 52h1M256 52h1M260 52h1M263 52h1M266 52h1M273 52h1M201 53h1M208 53h1M211 53h1M215 53h1M218 53h1M224 53h1M228 53h1M231 53h1M234 53h1M240 53h1M243 53h1M246 53h1M250 53h1M256 53h1M260 53h1M263 53h1M266 53h1M273 53h1M276 53h1M195 54h1M198 54h1M201 54h1M208 54h1M212 54h1M215 54h1M218 54h1M224 54h1M228 54h1M231 54h1M234 54h1M240 54h1M243 54h1M246 54h1M250 54h1M256 54h1M260 54h1M263 54h1M266 54h1M273 54h1M276 54h1M280 54h1M283 54h1M191 55h1M195 55h1M198 55h1M202 55h1M208 55h1M212 55h1M215 55h1M219 55h1M225 55h1M228 55h1M231 55h1M234 55h1M240 55h1M243 55h1M246 55h1M249 55h1M255 55h1M259 55h1M263 55h1M266 55h1M272 55h1M275 55h1M279 55h1M283 55h1M191 56h1M195 56h1M199 56h1M202 56h1M208 56h1M212 56h1M215 56h1M219 56h1M225 56h1M228 56h1M231 56h1M234 56h1M240 56h1M243 56h1M246 56h1M249 56h1M255 56h1M259 56h1M262 56h1M265 56h1M272 56h1M275 56h1M279 56h1M282 56h1M289 56h1M292 56h1M182 57h1M185 57h1M192 57h1M196 57h1M199 57h1M202 57h1M209 57h1M212 57h1M215 57h1M219 57h1M225 57h1M228 57h1M231 57h1M234 57h1M240 57h1M243 57h1M246 57h1M249 57h1M255 57h1M259 57h1M262 57h1M265 57h1M272 57h1M275 57h1M279 57h1M282 57h1M288 57h1M292 57h1M296 57h1M182 58h1M186 58h1M192 58h1M196 58h1M199 58h1M202 58h1M209 58h1M212 58h1M215 58h1M219 58h1M225 58h1M228 58h1M231 58h1M234 58h1M240 58h1M243 58h1M246 58h1M249 58h1M255 58h1M259 58h1M262 58h1M265 58h1M272 58h1M275 58h1M278 58h1M282 58h1M288 58h1M291 58h1M296 58h1M179 59h1M183 59h1M186 59h1M192 59h1M196 59h1M199 59h1M202 59h1M209 59h1M213 59h1M216 59h1M219 59h1M225 59h1M228 59h1M231 59h1M234 59h1M240 59h1M243 59h1M246 59h1M249 59h1M255 59h1M259 59h1M262 59h1M265 59h1M272 59h1M275 59h1M278 59h1M281 59h1M288 59h1M291 59h1M295 59h1M299 59h1M175 60h1M179 60h1M183 60h1M186 60h1M193 60h1M196 60h1M199 60h1M202 60h1M209 60h1M213 60h1M216 60h1M219 60h1M255 60h1M259 60h1M262 60h1M265 60h1M271 60h1M275 60h1M278 60h1M281 60h1M288 60h1M291 60h1M295 60h1M298 60h1M175 61h1M180 61h1M183 61h1M186 61h1M193 61h1M196 61h1M199 61h1M203 61h1M209 61h1M213 61h1M216 61h1M262 61h1M265 61h1M271 61h1M274 61h1M278 61h1M281 61h1M287 61h1M291 61h1M294 61h1M298 61h1M305 61h1M176 62h1M180 62h1M183 62h1M187 62h1M193 62h1M197 62h1M200 62h1M203 62h1M209 62h1M271 62h1M274 62h1M277 62h1M281 62h1M287 62h1M290 62h1M294 62h1M297 62h1M305 62h1M308 62h1M169 63h1M176 63h1M180 63h1M184 63h1M187 63h1M193 63h1M197 63h1M200 63h1M203 63h1M274 63h1M277 63h1M280 63h1M287 63h1M290 63h1M294 63h1M297 63h1M304 63h1M308 63h1M166 64h1M170 64h1M177 64h1M181 64h1M184 64h1M187 64h1M194 64h1M197 64h1M280 64h1M287 64h1M290 64h1M293 64h1M297 64h1M304 64h1M307 64h1M311 64h1M163 65h1M167 65h1M170 65h1M177 65h1M181 65h1M184 65h1M187 65h1M194 65h1M286 65h1M290 65h1M293 65h1M296 65h1M303 65h1M307 65h1M310 65h1M314 65h1M163 66h1M167 66h1M171 66h1M177 66h1M181 66h1M184 66h1M188 66h1M289 66h1M292 66h1M296 66h1M303 66h1M306 66h1M310 66h1M313 66h1M160 67h1M164 67h1M168 67h1M171 67h1M178 67h1M181 67h1M185 67h1M188 67h1M292 67h1M295 67h1M303 67h1M306 67h1M309 67h1M313 67h1M320 67h1M161 68h1M164 68h1M168 68h1M171 68h1M178 68h1M182 68h1M185 68h1M295 68h1M302 68h1M306 68h1M309 68h1M312 68h1M320 68h1M154 69h1M161 69h1M165 69h1M168 69h1M172 69h1M179 69h1M182 69h1M302 69h1M305 69h1M309 69h1M312 69h1M319 69h1M323 69h1M151 70h1M155 70h1M162 70h1M165 70h1M169 70h1M172 70h1M179 70h1M301 70h1M305 70h1M308 70h1M312 70h1M319 70h1M322 70h1M326 70h1M152 71h1M155 71h1M162 71h1M166 71h1M169 71h1M173 71h1M304 71h1M308 71h1M311 71h1M318 71h1M322 71h1M325 71h1M148 72h1M152 72h1M156 72h1M162 72h1M166 72h1M170 72h1M173 72h1M307 72h1M311 72h1M318 72h1M321 72h1M325 72h1M329 72h1M149 73h1M153 73h1M156 73h1M163 73h1M167 73h1M170 73h1M307 73h1M310 73h1M318 73h1M321 73h1M324 73h1M328 73h1M146 74h1M149 74h1M153 74h1M157 74h1M163 74h1M167 74h1M310 74h1M317 74h1M321 74h1M324 74h1M328 74h1M146 75h1M150 75h1M154 75h1M157 75h1M164 75h1M317 75h1M320 75h1M323 75h1M327 75h1M147 76h1M150 76h1M154 76h1M158 76h1M164 76h1M316 76h1M320 76h1M323 76h1M327 76h1M334 76h1M139 77h1M147 77h1M151 77h1M155 77h1M158 77h1M316 77h1M319 77h1M322 77h1M326 77h1M334 77h1M338 77h1M140 78h1M148 78h1M151 78h1M155 78h1M159 78h1M319 78h1M322 78h1M326 78h1M333 78h1M337 78h1M137 79h1M140 79h1M148 79h1M152 79h1M156 79h1M321 79h1M325 79h1M333 79h1M337 79h1M340 79h1M138 80h1M141 80h1M149 80h1M152 80h1M325 80h1M332 80h1M336 80h1M340 80h1M135 81h1M138 81h1M142 81h1M149 81h1M153 81h1M324 81h1M332 81h1M335 81h1M339 81h1M343 81h1M135 82h1M139 82h1M142 82h1M150 82h1M331 82h1M335 82h1M338 82h1M343 82h1M132 83h1M136 83h1M139 83h1M143 83h1M150 83h1M331 83h1M334 83h1M338 83h1M342 83h1M132 84h1M137 84h1M140 84h1M144 84h1M330 84h1M333 84h1M337 84h1M341 84h1M349 84h1M133 85h1M137 85h1M140 85h1M144 85h1M333 85h1M336 85h1M341 85h1M348 85h1M134 86h1M138 86h1M141 86h1M336 86h1M340 86h1M348 86h1M127 87h1M134 87h1M139 87h1M141 87h1M259 87h1M335 87h1M339 87h1M347 87h1M351 87h1M127 88h1M135 88h1M139 88h1M142 88h1M339 88h1M346 88h1M350 88h1M354 88h1M124 89h1M128 89h1M136 89h1M140 89h1M259 89h1M338 89h1M346 89h1M349 89h1M353 89h1M124 90h1M129 90h1M136 90h1M345 90h1M348 90h1M352 90h1M121 91h1M125 91h1M129 91h1M137 91h1M258 91h1M344 91h1M348 91h1M352 91h1M356 91h1M122 92h1M126 92h1M130 92h1M344 92h1M347 92h1M351 92h1M355 92h1M119 93h1M122 93h1M126 93h1M131 93h1M258 93h1M346 93h1M350 93h1M354 93h1M120 94h1M123 94h1M127 94h1M131 94h1M345 94h1M349 94h1M353 94h1M362 94h1M120 95h1M124 95h1M128 95h1M132 95h1M258 95h1M349 95h1M353 95h1M361 95h1M121 96h1M125 96h1M128 96h1M348 96h1M352 96h1M360 96h1M365 96h1M113 97h1M122 97h1M125 97h1M129 97h1M258 97h1M351 97h1M359 97h1M364 97h1M114 98h1M123 98h1M126 98h1M350 98h1M358 98h1M363 98h1M367 98h1M110 99h1M115 99h1M123 99h1M127 99h1M257 99h1M358 99h1M362 99h1M366 99h1M111 100h1M116 100h1M124 100h1M357 100h1M361 100h1M365 100h1M108 101h1M112 101h1M117 101h1M257 101h1M356 101h1M361 101h1M364 101h1M370 101h1M109 102h1M113 102h1M117 102h1M355 102h1M360 102h1M363 102h1M369 102h1M110 103h1M114 103h1M118 103h1M257 103h1M359 103h1M363 103h1M368 103h1M105 104h1M111 104h1M114 104h1M119 104h1M358 104h1M362 104h1M366 104h2M106 105h1M112 105h1M115 105h1M257 105h1M361 105h1M365 105h1M374 105h1M107 106h1M112 106h1M116 106h1M360 106h1M364 106h1M373 106h1M108 107h1M113 107h1M117 107h1M256 107h1M363 107h1M372 107h1M101 108h1M109 108h2M114 108h1M362 108h1M371 108h1M377 108h1M102 109h1M111 109h1M115 109h1M256 109h1M370 109h1M376 109h1M103 110h1M112 110h1M370 110h1M375 110h1M379 110h1M98 111h1M104 111h1M113 111h1M256 111h1M369 111h1M373 111h2M378 111h1M99 112h1M105 112h1M368 112h1M372 112h1M377 112h1M96 113h1M100 113h1M105 113h1M255 113h1M367 113h1M371 113h1M375 113h2M381 113h1M97 114h1M101 114h1M106 114h1M370 114h1M374 114h1M380 114h1M98 115h1M102 115h2M107 115h1M255 115h1M369 115h1M373 115h1M379 115h1M94 116h1M99 116h1M104 116h1M108 116h1M372 116h1M377 116h2M95 117h1M100 117h2M105 117h1M255 117h1M371 117h1M376 117h1M96 118h1M102 118h1M106 118h1M375 118h1M97 119h1M103 119h1M255 119h1M374 119h1M385 119h1M98 120h2M104 120h1M383 120h2M100 121h1M254 121h1M382 121h1M387 121h1M91 122h1M101 122h1M381 122h1M385 122h2M92 123h1M102 123h1M254 123h1M379 123h2M384 123h1M88 124h1M93 124h1M378 124h1M383 124h1M388 124h2M89 125h1M94 125h2M254 125h1M381 125h2M387 125h1M90 126h2M96 126h1M380 126h1M385 126h2M87 127h1M92 127h1M97 127h1M254 127h1M379 127h1M384 127h1M390 127h2M88 128h1M93 128h1M98 128h1M382 128h2M389 128h1M84 129h1M89 129h1M94 129h2M253 129h1M381 129h1M387 129h2M85 130h2M90 130h2M96 130h1M386 130h1M87 131h1M92 131h1M253 131h1M384 131h2M88 132h2M93 132h1M383 132h1M394 132h2M90 133h1M94 133h1M129 133h1M253 133h1M393 133h1M91 134h2M391 134h2M81 135h2M131 135h1M253 135h1M353 135h1M390 135h1M396 135h2M83 136h1M388 136h2M395 136h1M84 137h2M133 137h1M252 137h1M351 137h1M387 137h1M393 137h2M399 137h1M79 138h2M86 138h1M392 138h1M397 138h2M81 139h1M87 139h2M135 139h1M252 139h1M349 139h1M390 139h2M395 139h2M401 139h1M77 140h1M82 140h2M89 140h1M347 140h1M389 140h1M393 140h2M399 140h2M78 141h2M84 141h1M137 141h1M252 141h1M391 141h2M398 141h1M80 142h1M85 142h2M345 142h1M390 142h1M396 142h2M75 143h1M81 143h2M87 143h1M139 143h1M252 143h1M395 143h1M76 144h2M83 144h1M343 144h1M393 144h2M78 145h2M84 145h2M141 145h1M251 145h1M404 145h1M80 146h2M143 146h1M341 146h1M402 146h2M82 147h2M251 147h1M400 147h2M84 148h1M145 148h1M339 148h1M398 148h2M406 148h1M72 149h1M251 149h1M396 149h2M404 149h2M73 150h2M147 150h1M337 150h1M395 150h1M402 150h2M75 151h2M251 151h1M335 151h1M400 151h2M407 151h2M70 152h1M77 152h2M149 152h1M398 152h2M405 152h2M71 153h2M79 153h2M250 153h1M333 153h1M397 153h1M403 153h2M73 154h2M81 154h1M151 154h1M401 154h2M409 154h1M68 155h2M75 155h2M250 155h1M331 155h1M399 155h2M407 155h2M70 156h2M77 156h2M153 156h1M405 156h2M72 157h3M79 157h1M250 157h1M329 157h1M403 157h2M67 158h2M75 158h2M155 158h1M401 158h2M69 159h2M77 159h2M249 159h1M327 159h1M400 159h1M71 160h3M157 160h1M411 160h1M74 161h2M249 161h1M325 161h1M409 161h2M76 162h2M159 162h1M323 162h1M406 162h3M249 163h1M404 163h2M412 163h2M65 164h1M161 164h1M321 164h1M402 164h2M410 164h2M66 165h2M249 165h1M408 165h2M68 166h3M163 166h1M319 166h1M406 166h2M414 166h1M63 167h2M71 167h2M248 167h1M404 167h2M412 167h2M65 168h2M73 168h2M165 168h1M317 168h1M409 168h3M67 169h3M248 169h1M407 169h2M415 169h1M62 170h2M70 170h2M167 170h1M315 170h1M405 170h2M413 170h2M64 171h2M72 171h1M248 171h1M313 171h1M410 171h3M66 172h3M169 172h1M408 172h2M61 173h2M69 173h2M171 173h1M248 173h1M311 173h1M406 173h2M63 174h2M71 174h1M65 175h3M173 175h1M247 175h1M309 175h1M417 175h2M68 176h2M415 176h2M70 177h1M175 177h1M247 177h1M307 177h1M412 177h3M410 178h2M58 179h2M97 179h1M177 179h1M247 179h1M305 179h1M408 179h2M418 179h2M60 180h2M99 180h1M414 180h4M62 181h3M101 181h1M179 181h1M247 181h1M303 181h1M411 181h3M57 182h2M65 182h2M103 182h1M301 182h1M409 182h2M420 182h2M59 183h2M67 183h2M105 183h1M181 183h1M246 183h1M416 183h4M61 184h3M107 184h1M109 184h1M299 184h1M412 184h4M64 185h2M111 185h1M183 185h1M246 185h1M410 185h2M421 185h1M56 186h2M66 186h2M113 186h1M297 186h1M417 186h4M58 187h4M115 187h1M185 187h1M246 187h1M413 187h4M62 188h4M117 188h1M295 188h1M411 188h2M56 189h1M66 189h1M119 189h1M121 189h1M187 189h1M246 189h1M57 190h4M123 190h1M293 190h1M61 191h4M125 191h1M189 191h1M245 191h1M422 191h2M65 192h1M127 192h1M291 192h1M418 192h4M129 193h1M191 193h1M245 193h1M289 193h1M415 193h3M131 194h1M413 194h2M54 195h2M133 195h1M135 195h1M193 195h1M245 195h1M287 195h1M422 195h3M56 196h3M137 196h1M417 196h5M59 197h4M139 197h1M195 197h1M244 197h1M285 197h1M414 197h3M54 198h1M63 198h2M141 198h1M423 198h2M55 199h3M143 199h1M197 199h1M244 199h1M283 199h1M417 199h6M58 200h4M145 200h1M147 200h1M199 200h1M415 200h2M62 201h2M149 201h1M244 201h1M281 201h1M424 201h2M53 202h2M151 202h1M201 202h1M418 202h6M55 203h6M153 203h1M244 203h1M279 203h1M415 203h3M61 204h3M155 204h1M203 204h1M277 204h1M52 205h3M157 205h1M159 205h1M243 205h1M55 206h5M161 206h1M205 206h1M275 206h1M60 207h3M163 207h1M243 207h1M165 208h1M207 208h1M273 208h1M422 208h5M167 209h1M243 209h1M416 209h6M169 210h1M171 210h1M209 210h1M271 210h1M173 211h1M243 211h1M425 211h3M51 212h5M175 212h1M211 212h1M269 212h1M420 212h5M56 213h6M177 213h1M242 213h1M267 213h1M417 213h3M179 214h1M213 214h1M426 214h2M51 215h5M181 215h1M242 215h1M265 215h1M420 215h6M56 216h6M183 216h1M185 216h1M215 216h1M417 216h3M187 217h1M242 217h1M263 217h1M50 218h5M189 218h1M217 218h1M423 218h6M55 219h6M191 219h1M242 219h1M261 219h1M418 219h5M193 220h1M219 220h1M195 221h1M197 221h1M241 221h1M259 221h1M50 222h5M199 222h1M221 222h1M55 223h6M201 223h1M241 223h1M257 223h1M203 224h1M223 224h1M255 224h1M424 224h6M205 225h1M241 225h1M419 225h5M207 226h1M209 226h1M225 226h1M253 226h1M211 227h1M227 227h1M241 227h1M49 228h6M213 228h1M251 228h1M419 228h11M55 229h5M215 229h1M229 229h1M240 229h1M217 230h1M249 230h1M219 231h1M221 231h1M231 231h1M240 231h1M419 231h11M49 232h11M223 232h1M247 232h1M225 233h1M233 233h1M240 233h1M227 234h1M245 234h1M419 234h11M49 235h11M229 235h1M235 235h1M240 235h1M243 235h1M231 236h1M233 236h1M235 237h1M237 237h1M239 237h1M241 237h1M49 238h11M237 238h1M239 239h1M241 240h1M419 240h11M237 241h1M239 241h1M245 242h1M247 242h1M238 243h1M243 243h1M249 243h1M419 243h11M49 244h11M233 244h1M251 244h1M238 245h1M245 245h1M253 245h1M231 246h1M255 246h1M419 246h11M49 247h11M238 247h1M247 247h1M257 247h1M259 247h1M363 247h5M229 248h1M261 248h1M368 248h6M238 249h1M249 249h1M263 249h1M419 249h5M49 250h11M227 250h1M265 250h1M424 250h6M237 251h1M251 251h1M267 251h1M225 252h1M253 252h1M269 252h1M271 252h1M55 253h5M237 253h1M273 253h1M49 254h6M223 254h1M255 254h1M275 254h1M221 255h1M237 255h1M277 255h1M418 255h6M257 256h1M279 256h1M424 256h5M219 257h1M237 257h1M281 257h1M283 257h1M259 258h1M285 258h1M55 259h6M217 259h1M236 259h1M287 259h1M418 259h5M50 260h5M261 260h1M289 260h1M423 260h6M215 261h1M236 261h1M291 261h1M59 262h3M263 262h1M293 262h1M295 262h1M417 262h6M53 263h6M213 263h1M236 263h1M423 263h5M51 264h2M265 264h1M299 264h1M59 265h3M211 265h1M236 265h1M301 265h1M417 265h5M54 266h5M209 266h1M267 266h1M303 266h1M422 266h6M51 267h3M235 267h1M305 267h1M207 268h1M269 268h1M307 268h1M309 268h1M57 269h6M235 269h1M311 269h1M52 270h5M205 270h1M271 270h1M313 270h1M235 271h1M315 271h1M416 271h3M203 272h1M273 272h1M317 272h1M419 272h5M235 273h1M319 273h1M321 273h1M424 273h3M201 274h1M275 274h1M323 274h1M415 274h3M61 275h3M199 275h1M234 275h1M325 275h1M418 275h6M55 276h6M277 276h1M327 276h1M424 276h2M53 277h2M197 277h1M234 277h1M415 277h2M62 278h2M279 278h1M331 278h1M333 278h1M417 278h3M56 279h6M195 279h1M234 279h1M281 279h1M335 279h1M420 279h4M54 280h2M337 280h1M414 280h2M424 280h1M62 281h3M193 281h1M234 281h1M283 281h1M339 281h1M416 281h3M57 282h5M341 282h1M419 282h4M54 283h3M191 283h1M233 283h1M285 283h1M343 283h1M345 283h1M423 283h2M64 284h2M347 284h1M60 285h4M189 285h1M233 285h1M349 285h1M57 286h3M187 286h1M351 286h1M413 286h1M55 287h2M233 287h1M289 287h1M353 287h1M414 287h4M185 288h1M355 288h1M418 288h4M232 289h1M291 289h1M357 289h1M359 289h1M412 289h1M422 289h1M66 290h2M183 290h1M361 290h1M413 290h4M62 291h4M232 291h1M293 291h1M363 291h1M417 291h4M58 292h4M181 292h1M365 292h1M411 292h2M421 292h2M57 293h1M67 293h2M232 293h1M295 293h1M367 293h1M413 293h2M63 294h4M179 294h1M369 294h1M371 294h1M415 294h3M59 295h4M232 295h1M297 295h1M373 295h1M410 295h2M418 295h2M57 296h2M68 296h2M177 296h1M375 296h1M412 296h2M420 296h2M64 297h4M175 297h1M231 297h1M299 297h1M377 297h1M414 297h3M61 298h3M379 298h1M417 298h2M59 299h2M69 299h2M173 299h1M231 299h1M301 299h1M381 299h1M419 299h1M67 300h2M64 301h3M171 301h1M231 301h1M303 301h1M408 301h1M62 302h2M409 302h2M61 303h1M169 303h1M231 303h1M305 303h1M411 303h3M407 304h1M414 304h2M71 305h2M167 305h1M230 305h1M307 305h1M408 305h2M416 305h2M69 306h2M309 306h1M410 306h3M66 307h3M165 307h1M230 307h1M405 307h2M413 307h2M64 308h2M72 308h2M163 308h1M311 308h1M407 308h2M415 308h2M63 309h1M70 309h2M230 309h1M409 309h3M67 310h3M161 310h1M313 310h1M404 310h2M412 310h2M65 311h2M73 311h2M230 311h1M406 311h2M414 311h1M64 312h1M71 312h2M315 312h1M408 312h3M69 313h2M229 313h1M411 313h2M67 314h2M75 314h2M157 314h1M317 314h1M413 314h1M66 315h1M73 315h2M229 315h1M70 316h3M155 316h1M319 316h1M401 316h2M68 317h2M153 317h1M229 317h1M403 317h2M67 318h1M321 318h1M405 318h3M78 319h1M151 319h1M229 319h1M400 319h2M408 319h2M76 320h2M323 320h1M402 320h2M410 320h2M74 321h2M149 321h1M228 321h1M399 321h1M404 321h3M72 322h2M79 322h2M325 322h1M400 322h2M407 322h2M70 323h2M77 323h2M147 323h1M228 323h1M402 323h2M409 323h1M69 324h1M75 324h2M327 324h1M397 324h1M404 324h2M73 325h2M81 325h1M145 325h1M398 325h2M406 325h2M71 326h2M79 326h2M329 326h1M400 326h2M408 326h1M77 327h2M143 327h1M402 327h2M75 328h2M82 328h2M141 328h1M331 328h1M404 328h2M73 329h2M80 329h2M227 329h1M406 329h1M72 330h1M78 330h2M139 330h1M333 330h1M394 330h1M76 331h2M227 331h1M395 331h2M74 332h2M137 332h1M335 332h1M397 332h2M86 333h1M227 333h1M337 333h1M393 333h2M399 333h2M84 334h2M135 334h1M395 334h1M401 334h2M83 335h1M226 335h1M339 335h1M391 335h1M396 335h2M81 336h2M88 336h1M133 336h1M392 336h2M398 336h1M80 337h1M86 337h2M226 337h1M341 337h1M394 337h1M399 337h2M78 338h2M84 338h2M89 338h1M131 338h1M389 338h1M395 338h2M401 338h1M82 339h2M87 339h2M129 339h1M226 339h1M343 339h1M390 339h2M397 339h1M80 340h2M86 340h1M392 340h1M398 340h2M79 341h1M84 341h2M91 341h1M127 341h1M226 341h1M345 341h1M393 341h2M83 342h1M89 342h2M395 342h1M81 343h2M88 343h1M125 343h1M225 343h1M347 343h1M396 343h2M86 344h2M386 344h2M85 345h1M225 345h1M349 345h1M384 345h1M388 345h1M83 346h2M95 346h1M385 346h1M389 346h2M93 347h2M225 347h1M386 347h1M391 347h1M92 348h1M382 348h1M387 348h1M392 348h2M90 349h2M97 349h1M225 349h1M383 349h1M388 349h2M394 349h1M89 350h1M95 350h2M174 350h9M380 350h1M384 350h2M390 350h1M87 351h2M94 351h1M99 351h1M165 351h9M224 351h1M381 351h1M386 351h1M391 351h1M92 352h2M98 352h1M382 352h1M387 352h1M91 353h1M96 353h2M224 353h1M383 353h1M388 353h2M89 354h2M95 354h1M100 354h1M384 354h2M390 354h1M94 355h1M98 355h2M224 355h1M376 355h1M386 355h1M92 356h2M97 356h1M377 356h1M387 356h1M91 357h1M96 357h1M224 357h1M378 357h1M94 358h2M374 358h1M379 358h1M93 359h1M104 359h1M223 359h1M375 359h1M380 359h2M103 360h1M372 360h1M376 360h1M382 360h1M101 361h2M107 361h1M223 361h1M373 361h1M377 361h1M383 361h1M100 362h1M106 362h1M370 362h1M374 362h1M378 362h2M384 362h1M99 363h1M105 363h1M109 363h1M223 363h1M371 363h1M375 363h1M380 363h1M98 364h1M103 364h2M108 364h1M372 364h1M376 364h2M381 364h1M97 365h1M102 365h1M107 365h1M111 365h1M223 365h1M373 365h1M378 365h1M382 365h1M101 366h1M105 366h2M110 366h1M374 366h1M379 366h1M100 367h1M104 367h1M109 367h1M222 367h1M365 367h1M374 367h1M380 367h1M99 368h1M103 368h1M108 368h1M366 368h1M375 368h1M102 369h1M107 369h1M222 369h1M363 369h1M367 369h1M376 369h1M101 370h1M107 370h1M116 370h1M364 370h1M368 370h1M377 370h1M106 371h1M115 371h1M222 371h1M361 371h1M365 371h1M369 371h2M105 372h1M114 372h1M118 372h1M362 372h1M366 372h1M371 372h1M104 373h1M112 373h2M117 373h1M221 373h1M363 373h1M367 373h1M372 373h1M111 374h1M116 374h1M120 374h1M359 374h1M364 374h1M367 374h1M373 374h1M110 375h1M115 375h1M119 375h1M221 375h1M360 375h1M365 375h1M368 375h1M109 376h1M114 376h1M118 376h1M123 376h1M361 376h1M365 376h1M369 376h1M108 377h1M114 377h1M117 377h1M122 377h1M221 377h1M362 377h1M366 377h1M370 377h1M113 378h1M116 378h1M121 378h1M354 378h1M362 378h1M367 378h1M112 379h1M116 379h1M120 379h1M221 379h1M351 379h1M355 379h1M363 379h1M368 379h1M111 380h1M115 380h1M119 380h1M128 380h1M352 380h1M355 380h1M364 380h1M114 381h1M119 381h1M127 381h1M220 381h1M349 381h1M353 381h1M356 381h1M365 381h1M113 382h1M118 382h1M126 382h1M130 382h1M350 382h1M353 382h1M357 382h1M117 383h1M125 383h1M129 383h1M220 383h1M346 383h1M350 383h1M354 383h1M358 383h1M116 384h1M124 384h1M128 384h1M133 384h1M347 384h1M351 384h1M355 384h1M358 384h1M124 385h1M128 385h1M132 385h1M220 385h1M347 385h1M352 385h1M356 385h1M359 385h1M123 386h1M127 386h1M131 386h1M134 386h1M348 386h1M352 386h1M356 386h1M122 387h1M126 387h1M130 387h1M134 387h1M220 387h1M341 387h1M349 387h1M353 387h1M357 387h1M125 388h1M129 388h1M133 388h1M342 388h1M349 388h1M354 388h1M125 389h1M129 389h1M132 389h1M140 389h1M219 389h1M338 389h1M342 389h1M350 389h1M354 389h1M124 390h1M128 390h1M132 390h1M139 390h1M336 390h1M339 390h1M343 390h1M351 390h1M127 391h1M131 391h1M139 391h1M143 391h1M219 391h1M337 391h1M339 391h1M344 391h1M351 391h1M130 392h1M138 392h1M142 392h1M333 392h1M337 392h1M340 392h1M344 392h1M130 393h1M137 393h1M142 393h1M145 393h1M334 393h1M338 393h1M341 393h1M345 393h1M129 394h1M137 394h1M141 394h1M145 394h1M148 394h1M334 394h1M338 394h1M341 394h1M346 394h1M136 395h1M140 395h1M144 395h1M147 395h1M328 395h1M335 395h1M339 395h1M342 395h1M346 395h1M135 396h1M140 396h1M143 396h1M147 396h1M329 396h1M336 396h1M339 396h1M343 396h1M135 397h1M139 397h1M143 397h1M146 397h1M154 397h1M325 397h1M329 397h1M336 397h1M340 397h1M343 397h1M138 398h1M142 398h1M146 398h1M153 398h1M322 398h1M326 398h1M330 398h1M337 398h1M340 398h1M138 399h1M141 399h1M145 399h1M153 399h1M157 399h1M323 399h1M326 399h1M330 399h1M338 399h1M341 399h1M141 400h1M145 400h1M152 400h1M156 400h1M159 400h1M319 400h1M323 400h1M327 400h1M331 400h1M338 400h1M140 401h1M144 401h1M152 401h1M156 401h1M159 401h1M162 401h1M320 401h1M324 401h1M327 401h1M331 401h1M144 402h1M151 402h1M155 402h1M158 402h1M162 402h1M314 402h1M320 402h1M324 402h1M328 402h1M332 402h1M143 403h1M151 403h1M155 403h1M158 403h1M161 403h1M314 403h1M321 403h1M325 403h1M328 403h1M332 403h1M150 404h1M154 404h1M157 404h1M161 404h1M168 404h1M311 404h1M315 404h1M321 404h1M325 404h1M329 404h1M333 404h1M150 405h1M154 405h1M157 405h1M160 405h1M168 405h1M308 405h1M311 405h1M315 405h1M322 405h1M326 405h1M329 405h1M149 406h1M153 406h1M157 406h1M160 406h1M167 406h1M171 406h1M305 406h1M308 406h1M312 406h1M316 406h1M322 406h1M326 406h1M330 406h1M153 407h1M156 407h1M160 407h1M167 407h1M170 407h1M174 407h1M305 407h1M309 407h1M312 407h1M316 407h1M323 407h1M327 407h1M152 408h1M156 408h1M159 408h1M166 408h1M170 408h1M173 408h1M177 408h1M299 408h1M306 408h1M309 408h1M313 408h1M316 408h1M323 408h1M155 409h1M159 409h1M166 409h1M169 409h1M173 409h1M176 409h1M296 409h1M299 409h1M306 409h1M310 409h1M313 409h1M317 409h1M324 409h1M155 410h1M158 410h1M166 410h1M169 410h1M172 410h1M176 410h1M183 410h1M293 410h1M296 410h1M300 410h1M307 410h1M310 410h1M314 410h1M317 410h1M158 411h1M165 411h1M169 411h1M172 411h1M175 411h1M183 411h1M186 411h1M290 411h1M293 411h1M297 411h1M300 411h1M307 411h1M310 411h1M314 411h1M318 411h1M165 412h1M168 412h1M172 412h1M175 412h1M182 412h1M186 412h1M189 412h1M290 412h1M294 412h1M297 412h1M301 412h1M307 412h1M311 412h1M315 412h1M164 413h1M168 413h1M171 413h1M175 413h1M182 413h1M185 413h1M188 413h1M192 413h1M284 413h1M291 413h1M294 413h1M297 413h1M301 413h1M308 413h1M311 413h1M167 414h1M171 414h1M174 414h1M181 414h1M185 414h1M188 414h1M191 414h1M198 414h1M281 414h1M284 414h1M291 414h1M294 414h1M298 414h1M301 414h1M308 414h1M312 414h1M167 415h1M170 415h1M174 415h1M181 415h1M184 415h1M188 415h1M191 415h1M198 415h1M201 415h1M204 415h1M275 415h1M278 415h1M281 415h1M285 415h1M291 415h1M294 415h1M298 415h1M302 415h1M309 415h1M170 416h1M173 416h1M181 416h1M184 416h1M188 416h1M191 416h1M197 416h1M201 416h1M204 416h1M207 416h1M269 416h1M275 416h1M278 416h1M281 416h1M285 416h1M291 416h1M295 416h1M298 416h1M302 416h1M173 417h1M180 417h1M184 417h1M187 417h1M191 417h1M197 417h1M200 417h1M204 417h1M207 417h1M213 417h1M216 417h1M262 417h1M265 417h1M269 417h1M275 417h1M279 417h1M282 417h1M285 417h1M292 417h1M295 417h1M298 417h1M303 417h1M180 418h1M183 418h1M187 418h1M190 418h1M197 418h1M200 418h1M203 418h1M207 418h1M213 418h1M216 418h1M219 418h1M223 418h1M259 418h1M262 418h1M265 418h1M269 418h1M276 418h1M279 418h1M282 418h1M286 418h1M292 418h1M295 418h1M299 418h1M179 419h1M183 419h1M187 419h1M190 419h1M196 419h1M200 419h1M203 419h1M206 419h1M213 419h1M216 419h1M219 419h1M223 419h1M229 419h1M232 419h1M235 419h1M238 419h1M244 419h1M247 419h1M250 419h1M253 419h1M259 419h1M262 419h1M265 419h1M269 419h1M276 419h1M279 419h1M282 419h1M286 419h1M292 419h1M295 419h1M299 419h1M179 420h1M182 420h1M187 420h1M190 420h1M196 420h1M199 420h1M203 420h1M206 420h1M213 420h1M216 420h1M219 420h1M223 420h1M229 420h1M232 420h1M235 420h1M238 420h1M244 420h1M247 420h1M250 420h1M253 420h1M259 420h1M263 420h1M266 420h1M269 420h1M276 420h1M279 420h1M282 420h1M286 420h1M292 420h1M296 420h1M182 421h1M186 421h1M190 421h1M196 421h1M199 421h1M203 421h1M206 421h1M213 421h1M216 421h1M219 421h1M223 421h1M229 421h1M232 421h1M235 421h1M238 421h1M244 421h1M247 421h1M250 421h1M253 421h1M259 421h1M263 421h1M266 421h1M269 421h1M276 421h1M279 421h1M282 421h1M286 421h1M293 421h1M296 421h1M186 422h1M189 422h1M196 422h1M199 422h1M203 422h1M206 422h1M212 422h1M216 422h1M219 422h1M223 422h1M229 422h1M232 422h1M235 422h1M238 422h1M244 422h1M247 422h1M250 422h1M253 422h1M259 422h1M263 422h1M266 422h1M270 422h1M276 422h1M279 422h1M283 422h1M287 422h1M195 423h1M199 423h1M203 423h1M206 423h1M212 423h1M215 423h1M218 423h1M223 423h1M229 423h1M232 423h1M235 423h1M238 423h1M244 423h1M247 423h1M250 423h1M253 423h1M260 423h1M263 423h1M266 423h1M270 423h1M276 423h1M280 423h1M283 423h1M287 423h1M195 424h1M198 424h1M202 424h1M205 424h1M212 424h1M215 424h1M218 424h1M222 424h1M228 424h1M232 424h1M235 424h1M238 424h1M244 424h1M247 424h1M250 424h1M254 424h1M260 424h1M263 424h1M266 424h1M270 424h1M277 424h1M280 424h1M283 424h1M202 425h1M205 425h1M212 425h1M215 425h1M218 425h1M222 425h1M228 425h1M232 425h1M235 425h1M238 425h1M244 425h1M247 425h1M250 425h1M254 425h1M260 425h1M263 425h1M267 425h1M270 425h1M277 425h1M205 426h1M212 426h1M215 426h1M218 426h1M222 426h1M228 426h1M232 426h1M235 426h1M238 426h1M244 426h1M247 426h1M250 426h1M254 426h1M260 426h1M264 426h1M267 426h1M270 426h1M212 427h1M215 427h1M218 427h1M222 427h1M228 427h1M232 427h1M235 427h1M238 427h1M244 427h1M247 427h1M250 427h1M254 427h1M260 427h1M264 427h1M267 427h1M218 428h1M222 428h1M228 428h1M232 428h1M235 428h1M238 428h1M244 428h1M247 428h1M250 428h1M254 428h1M260 428h1M228 429h1M232 429h1M235 429h1M238 429h1M244 429h1M247 429h1M250 429h1M254 429h1"/>
<path stroke="#ff0000" d="M242 67h1M236 68h2M241 68h1M238 69h1M241 69h1M238 70h1M241 70h1M237 71h1M241 71h1M237 72h1M241 72h1M236 73h1M241 73h1M236 74h8M241 75h1M86 95h1M80 96h2M85 96h1M82 97h1M85 97h1M82 98h1M85 98h1M81 99h1M85 99h1M81 100h1M85 100h1M80 101h1M85 101h1M80 102h8M85 103h1M70 113h5M73 114h2M72 115h1M74 115h1M71 116h1M74 116h1M70 117h1M74 117h1M69 118h1M60 119h1M68 119h1M61 120h1M67 120h1M62 121h1M66 121h1M63 122h1M65 122h1M64 123h1M63 124h1M65 124h1M62 125h1M66 125h1M61 126h1M67 126h1M60 127h1M68 127h1M59 128h1M58 129h1M625 136h1M628 136h1M630 136h2M624 137h2M628 137h2M632 137h1M625 138h1M627 138h1M629 138h1M632 138h1M625 139h1M627 139h1M630 139h2M625 140h1M627 140h1M631 140h1M426 141h5M626 141h1M632 141h1M425 142h1M431 142h1M626 142h1M632 142h1M424 143h1M432 143h1M626 143h1M632 143h1M423 144h1M433 144h1M631 144h1M422 145h1M434 145h1M422 146h1M434 146h1M422 147h1M434 147h1M422 148h1M434 148h1M422 149h1M434 149h1M423 150h1M433 150h1M424 151h1M432 151h1M424 152h1M432 152h1M420 153h1M424 153h1M432 153h1M421 154h1M423 154h1M433 154h1M422 155h1M434 155h1M435 156h1M436 157h1M437 170h3M435 171h2M440 171h2M435 172h1M441 172h1M434 173h1M442 173h1M434 174h1M438 174h1M442 174h1M434 175h1M442 175h1M435 176h1M441 176h1M625 176h1M632 176h1M435 177h2M440 177h2M626 177h6M437 178h3M627 178h1M630 178h1M627 179h1M630 179h1M627 180h1M630 180h1M627 181h1M630 181h1M627 182h1M630 182h1M626 183h6M625 184h1M632 184h1M627 218h3M626 219h1M630 219h1M626 220h1M630 220h1M624 221h4M629 221h4M624 223h9M388 241h1M387 242h1M377 243h2M386 243h1M379 244h1M386 244h1M380 245h1M386 245h1M358 246h1M380 246h1M386 246h1M357 247h3M380 247h1M386 247h1M358 248h1M379 248h1M386 248h1M379 249h1M386 249h1M378 250h1M386 250h1M378 251h1M386 251h1M377 252h1M386 252h1M377 253h1M386 253h1M376 254h1M386 254h1M376 255h15M386 256h1M386 257h1M76 266h3M627 266h3M77 267h2M625 267h2M630 267h2M76 268h1M78 268h1M625 268h1M631 268h1M72 269h2M75 269h1M624 269h1M632 269h1M71 270h1M74 270h1M624 270h1M628 270h1M632 270h1M70 271h1M75 271h1M624 271h1M632 271h1M70 272h1M75 272h1M625 272h1M631 272h1M71 273h1M74 273h1M625 273h2M630 273h2M72 274h2M627 274h3M630 306h3M631 307h2M630 308h1M632 308h1M626 309h2M629 309h1M625 310h1M628 310h1M150 311h5M624 311h1M629 311h1M155 312h9M624 312h1M629 312h1M146 313h1M164 313h9M625 313h1M628 313h1M145 314h3M173 314h9M626 314h2M146 315h1M182 315h8M190 316h3M194 316h5M631 316h1M199 317h9M625 317h2M630 317h1M208 318h9M627 318h1M630 318h1M217 319h9M627 319h1M630 319h1M226 320h9M626 320h1M630 320h1M130 321h6M235 321h9M626 321h1M630 321h1M134 322h2M244 322h9M625 322h1M630 322h1M133 323h1M135 323h1M253 323h9M625 323h8M132 324h1M135 324h1M262 324h8M630 324h1M131 325h1M135 325h1M270 325h9M130 326h1M135 326h1M279 326h9M122 327h5M129 327h1M288 327h9M121 328h1M127 328h2M297 328h9M120 329h1M128 329h1M306 329h1M308 329h3M119 330h1M129 330h1M163 330h1M119 331h1M129 331h1M162 331h3M119 332h1M129 332h1M163 332h1M119 333h1M129 333h1M119 334h1M129 334h1M120 335h1M128 335h1M121 336h1M127 336h1M122 337h5M143 339h5M369 339h3M141 340h2M148 340h2M367 340h2M372 340h2M140 341h1M150 341h1M367 341h1M373 341h1M139 342h1M151 342h1M366 342h1M374 342h1M138 343h1M152 343h1M366 343h1M370 343h1M374 343h1M138 344h1M152 344h1M366 344h1M374 344h1M137 345h1M153 345h1M367 345h1M373 345h1M137 346h1M153 346h1M367 346h2M372 346h2M137 347h1M145 347h1M153 347h1M369 347h3M137 348h1M153 348h1M137 349h1M153 349h1M138 350h1M152 350h1M138 351h1M152 351h1M139 352h1M151 352h1M140 353h1M150 353h1M141 354h2M148 354h2M143 355h5M198 440h3M217 440h3M227 440h3M199 441h2M216 441h1M220 441h1M226 441h1M230 441h1M198 442h1M200 442h1M215 442h1M221 442h1M225 442h1M231 442h1M194 443h2M197 443h1M215 443h1M221 443h1M225 443h1M231 443h1M193 444h1M196 444h1M215 444h1M221 444h1M225 444h1M231 444h1M192 445h1M197 445h1M216 445h1M222 445h1M224 445h1M230 445h1M192 446h1M197 446h1M217 446h1M222 446h1M224 446h1M229 446h1M193 447h1M196 447h1M222 447h1M224 447h1M194 448h2M222 448h3M223 449h1M223 450h1M223 451h1M223 452h1M223 453h1M223 454h1M223 455h1M223 456h1"/>
<path stroke="#ffff00" d="M281 30h3M280 31h1M284 31h1M280 32h1M284 32h1M280 33h1M284 33h1M281 34h3M282 35h1M280 36h5M282 37h1M282 38h1M349 58h1M353 58h1M357 58h1M350 59h1M352 59h1M354 59h1M356 59h1M358 59h1M351 60h1M355 60h1M359 60h1M363 60h1M351 61h1M355 61h1M359 61h1M362 61h2M351 62h1M355 62h1M359 62h1M361 62h1M363 62h1M351 63h1M355 63h1M359 63h2M363 63h1M351 64h1M355 64h1M359 64h1M363 64h1M351 65h1M355 65h1M359 65h1M363 65h1M351 66h1M355 66h1M359 66h1M363 66h1M351 67h1M355 67h1M359 67h1M363 67h1M351 68h1M355 68h1M359 68h1M363 68h1M351 69h1M355 69h1M359 69h1M363 69h1M351 70h1M355 70h1M359 70h1M363 70h1M351 71h1M355 71h1M360 71h1M362 71h1M351 72h1M355 72h1M361 72h1M360 73h1M362 73h1M359 74h1M363 74h1M158 88h1M156 89h5M158 90h1M158 91h1M160 91h2M158 92h2M162 92h1M158 93h1M162 93h1M158 94h1M161 94h1M158 95h1M161 95h1M162 96h1M624 146h1M632 146h1M625 147h1M631 147h1M626 148h1M630 148h1M626 149h1M630 149h1M624 150h9M626 151h1M630 151h1M626 152h1M630 152h1M625 153h1M631 153h1M624 154h1M632 154h1M625 186h1M632 186h1M626 187h6M627 188h1M630 188h1M627 189h1M630 189h1M627 190h1M630 190h1M627 191h1M630 191h1M33 192h1M627 192h1M630 192h1M31 193h5M626 193h6M33 194h1M625 194h1M632 194h1M33 195h1M35 195h2M33 196h2M37 196h1M33 197h1M37 197h1M33 198h1M36 198h1M33 199h1M36 199h1M37 200h1M403 204h3M402 205h1M406 205h1M402 206h1M406 206h1M402 207h1M406 207h1M403 208h3M404 209h1M402 210h5M404 211h1M404 212h1M24 215h1M30 215h1M34 215h3M23 216h2M30 216h2M33 216h1M37 216h1M22 217h1M24 217h1M30 217h1M32 217h1M38 217h1M24 218h1M29 218h1M31 218h1M38 218h1M24 219h1M28 219h1M32 219h1M38 219h1M24 220h1M28 220h1M33 220h1M37 220h1M24 221h1M28 221h1M34 221h3M24 222h1M28 222h1M35 222h1M24 223h1M28 223h1M36 223h1M25 224h1M27 224h1M37 224h1M26 225h1M38 225h1M26 226h1M38 226h1M624 226h1M626 226h1M628 226h1M26 227h1M38 227h1M625 227h1M627 227h1M629 227h1M26 228h1M38 228h1M625 228h1M627 228h1M629 228h1M26 229h1M38 229h1M625 229h1M627 229h1M629 229h1M37 230h1M625 230h1M627 230h1M629 230h1M36 231h1M625 231h1M627 231h1M629 231h1M625 232h1M627 232h1M629 232h1M632 232h1M625 233h1M627 233h1M629 233h1M632 233h1M630 234h2M627 296h3M626 297h1M630 297h1M626 298h1M630 298h1M626 299h1M630 299h1M627 300h3M628 301h1M626 302h5M628 303h1M628 304h1M627 326h1M625 327h5M627 328h1M627 329h1M629 329h2M627 330h2M631 330h1M627 331h1M631 331h1M627 332h1M630 332h1M627 333h1M630 333h1M631 334h1M187 341h1M187 342h1M185 346h2M185 347h1M203 352h1M202 353h3M203 354h1M174 360h5M173 361h1M179 361h1M172 362h1M180 362h1M172 363h1M180 363h1M172 364h1M180 364h1M172 365h1M180 365h1M172 366h1M180 366h1M173 367h1M179 367h1M136 368h3M174 368h5M135 369h1M139 369h1M176 369h1M135 370h1M139 370h1M176 370h1M135 371h1M139 371h1M176 371h1M136 372h3M172 372h9M210 372h1M137 373h1M176 373h1M210 373h1M135 374h5M176 374h1M206 374h9M137 375h1M176 375h1M210 375h1M137 376h1M176 376h1M210 376h1M210 377h1M210 378h1M214 378h3M210 379h1M213 379h1M217 379h1M210 380h3M218 380h1M210 381h1M218 381h1M210 382h1M218 382h1M210 383h1M217 383h1M210 384h1M216 384h1M210 385h1M216 385h1M210 386h1M216 386h1M217 387h1M218 388h1M323 420h1M335 420h1M324 421h1M334 421h1M324 422h1M334 422h1M325 423h2M332 423h2M327 424h5M325 425h2M332 425h2M324 426h1M334 426h1M324 427h1M334 427h1M323 428h1M335 428h1M323 429h1M335 429h1M323 430h1M335 430h1M323 431h1M335 431h1M323 432h1M335 432h1M324 433h1M334 433h1M303 434h3M324 434h1M334 434h1M302 435h1M306 435h1M325 435h2M332 435h2M302 436h1M306 436h1M327 436h5M302 437h1M306 437h1M303 438h3M304 439h1M302 440h5M304 441h1M304 442h1"/>
<path stroke="#00ff00" d="M253 26h5M252 27h1M258 27h1M251 28h1M259 28h1M251 29h1M259 29h1M251 30h1M259 30h1M252 31h1M258 31h1M247 32h7M257 32h7M247 36h17M377 79h1M381 79h1M378 80h3M377 81h1M381 81h1M377 82h1M381 82h1M377 83h1M381 83h1M378 84h3M379 85h1M377 86h5M379 87h1M105 131h1M111 131h1M106 132h1M110 132h1M106 133h1M108 133h1M110 133h1M106 134h5M106 135h1M108 135h1M110 135h1M105 136h1M108 136h1M111 136h1M107 137h3M107 138h1M109 138h1M108 139h1M625 156h2M630 156h2M624 157h1M627 157h1M629 157h1M632 157h1M624 158h1M627 158h1M629 158h1M632 158h1M625 159h1M627 159h1M629 159h1M631 159h1M628 160h1M628 161h1M628 162h1M628 163h1M628 164h1M627 197h3M625 198h2M630 198h2M624 199h1M629 199h1M632 199h1M625 200h2M629 200h1M632 200h1M624 201h1M627 201h1M630 201h2M624 202h1M627 202h1M632 202h1M625 203h2M630 203h2M627 204h3M351 214h1M350 215h1M349 216h1M348 217h1M347 218h1M345 219h2M344 220h1M343 221h1M342 222h1M341 223h1M340 224h1M339 225h1M338 226h1M337 227h1M335 228h2M334 229h2M333 230h1M332 231h1M331 232h1M330 233h1M329 234h1M328 235h1M327 236h1M630 236h3M326 237h1M631 237h2M324 238h2M630 238h1M632 238h1M323 239h2M625 239h1M629 239h1M322 240h2M626 240h1M628 240h1M321 241h1M627 241h1M320 242h1M626 242h1M628 242h1M319 243h1M625 243h1M629 243h1M318 244h1M624 244h1M317 245h1M316 246h1M314 247h2M313 248h2M352 248h1M312 249h2M349 249h1M351 249h1M311 250h2M346 250h1M310 251h1M347 251h1M309 252h1M343 252h1M308 253h1M340 253h1M343 253h1M307 254h1M337 254h1M306 255h1M339 255h1M305 256h1M334 256h1M303 257h2M331 257h1M302 258h2M328 258h1M335 258h1M301 259h2M325 259h1M300 260h2M331 260h1M299 261h1M322 261h1M298 262h1M319 262h1M327 262h1M297 263h1M316 263h1M296 264h1M323 264h1M295 265h1M313 265h1M294 266h1M310 266h1M292 267h2M307 267h1M319 267h1M291 268h2M290 269h2M304 269h1M315 269h1M130 270h1M289 270h2M301 270h1M134 271h1M288 271h2M298 271h1M311 271h1M138 272h1M287 272h1M295 272h1M286 273h1M307 273h1M142 274h1M285 274h1M292 274h1M146 275h1M284 275h1M289 275h1M150 276h1M282 276h2M286 276h1M303 276h1M281 277h2M154 278h1M280 278h2M283 278h1M299 278h1M158 279h1M279 279h2M162 280h1M277 280h3M295 280h1M274 281h1M277 281h2M166 282h1M276 282h1M291 282h1M170 283h1M271 283h1M275 283h1M174 284h1M268 284h1M274 284h1M397 284h1M401 284h1M178 285h1M265 285h1M273 285h1M287 285h1M398 285h3M271 286h2M397 286h1M401 286h1M626 286h1M630 286h1M182 287h1M262 287h1M270 287h2M283 287h1M397 287h1M401 287h1M627 287h3M186 288h1M259 288h1M269 288h2M397 288h1M401 288h1M626 288h1M630 288h1M190 289h1M256 289h1M268 289h2M279 289h1M398 289h3M626 289h1M630 289h1M267 290h2M399 290h1M626 290h1M630 290h1M194 291h1M253 291h1M266 291h2M275 291h1M397 291h5M627 291h3M198 292h1M250 292h1M265 292h1M399 292h1M628 292h1M202 293h1M247 293h1M264 293h1M626 293h5M244 294h1M263 294h1M271 294h1M628 294h1M206 295h1M261 295h2M210 296h1M241 296h1M260 296h2M267 296h1M214 297h1M238 297h1M259 297h2M235 298h1M258 298h2M263 298h1M218 299h1M257 299h2M37 300h1M43 300h1M222 300h1M232 300h1M256 300h2M259 300h1M38 301h1M42 301h1M226 301h1M229 301h1M255 301h2M38 302h1M40 302h1M42 302h1M226 302h1M254 302h2M38 303h5M223 303h1M230 303h1M253 303h1M255 303h1M38 304h1M40 304h1M42 304h1M234 304h1M252 304h1M37 305h1M40 305h1M43 305h1M220 305h1M238 305h1M250 305h2M39 306h3M217 306h1M249 306h2M39 307h1M41 307h1M214 307h1M242 307h1M247 307h3M40 308h1M246 308h3M211 309h1M243 309h1M246 309h2M250 309h1M208 310h1M245 310h2M205 311h1M244 311h2M254 311h1M202 312h1M239 312h1M243 312h2M258 312h1M242 313h1M262 313h1M199 314h1M235 314h1M240 314h2M266 314h1M196 315h1M239 315h2M193 316h1M231 316h1M238 316h2M270 316h1M237 317h2M274 317h1M190 318h1M227 318h1M236 318h2M278 318h1M187 319h1M235 319h2M184 320h1M235 320h1M282 320h1M46 321h1M52 321h1M58 321h1M223 321h1M233 321h2M286 321h1M45 322h2M51 322h2M57 322h1M181 322h1M232 322h2M290 322h1M45 323h1M47 323h1M51 323h1M53 323h1M57 323h1M178 323h1M219 323h1M231 323h1M44 324h1M47 324h1M50 324h1M53 324h1M56 324h1M175 324h1M229 324h2M294 324h1M43 325h1M47 325h1M49 325h1M53 325h1M55 325h1M172 325h1M215 325h1M228 325h2M298 325h1M43 326h1M48 326h2M54 326h2M227 326h2M302 326h1M42 327h1M48 327h1M54 327h1M169 327h1M211 327h1M226 327h2M166 328h1M225 328h2M306 328h1M224 329h2M207 330h1M223 330h2M46 331h1M52 331h1M58 331h1M222 331h2M45 332h2M51 332h2M57 332h1M203 332h1M221 332h2M313 332h1M45 333h1M47 333h1M51 333h1M53 333h1M57 333h1M220 333h2M312 333h3M44 334h1M47 334h1M50 334h1M53 334h1M56 334h1M199 334h1M218 334h2M313 334h1M43 335h1M47 335h1M49 335h1M53 335h1M55 335h1M217 335h2M43 336h1M48 336h2M54 336h2M195 336h1M216 336h2M625 336h1M631 336h1M42 337h1M48 337h1M54 337h1M215 337h2M626 337h1M630 337h1M214 338h2M626 338h1M628 338h1M630 338h1M191 339h1M213 339h2M626 339h5M212 340h2M626 340h1M628 340h1M630 340h1M211 341h2M625 341h1M628 341h1M631 341h1M210 342h2M627 342h3M208 343h3M627 343h1M629 343h1M184 344h1M207 344h2M322 344h1M334 344h1M628 344h1M183 345h3M206 345h2M323 345h1M333 345h1M184 346h1M205 346h2M324 346h1M332 346h1M204 347h2M324 347h1M332 347h1M203 348h2M324 348h1M328 348h1M332 348h1M324 349h1M328 349h1M332 349h1M406 349h1M420 349h1M324 350h9M407 350h1M419 350h1M156 351h1M164 351h1M324 351h1M328 351h1M332 351h1M408 351h11M157 352h1M163 352h1M324 352h1M328 352h1M332 352h1M410 352h1M416 352h1M158 353h5M323 353h1M328 353h1M333 353h1M410 353h1M416 353h1M157 354h1M163 354h1M322 354h1M328 354h1M334 354h1M410 354h1M416 354h1M156 355h1M164 355h1M328 355h1M410 355h1M416 355h1M156 356h1M164 356h1M327 356h3M410 356h1M416 356h1M156 357h1M164 357h1M326 357h1M330 357h1M410 357h1M416 357h1M156 358h1M164 358h1M326 358h1M330 358h1M410 358h1M416 358h1M156 359h1M164 359h1M326 359h1M330 359h1M410 359h1M416 359h1M157 360h1M163 360h1M327 360h3M410 360h1M416 360h1M158 361h5M410 361h1M416 361h1M160 362h1M410 362h1M416 362h1M160 363h1M408 363h11M160 364h1M407 364h1M419 364h1M156 365h9M406 365h1M420 365h1M160 366h1M160 367h1M393 375h1M397 375h1M394 376h3M393 377h1M397 377h1M393 378h1M397 378h1M393 379h1M397 379h1M394 380h3M395 381h1M393 382h5M395 383h1M237 403h1M241 403h1M238 404h3M237 405h1M241 405h1M237 406h1M241 406h1M237 407h1M241 407h1M238 408h3M239 409h1M237 410h5M239 411h1"/>
<path stroke="#0000ff" d="M171 36h1M174 36h1M177 36h1M171 37h1M173 37h1M175 37h1M177 37h1M171 38h1M174 38h1M177 38h1M172 39h1M176 39h1M173 40h3M174 41h1M141 42h1M145 42h1M149 42h1M172 42h5M142 43h1M144 43h1M146 43h1M148 43h1M150 43h1M174 43h1M143 44h1M147 44h1M151 44h1M174 44h1M143 45h1M147 45h1M151 45h1M143 46h1M147 46h1M151 46h1M143 47h1M147 47h1M151 47h1M143 48h1M147 48h1M151 48h1M143 49h1M147 49h1M151 49h1M143 50h1M147 50h1M151 50h1M143 51h1M147 51h1M151 51h1M143 52h1M147 52h1M151 52h1M143 53h1M147 53h1M151 53h1M156 53h1M143 54h1M147 54h1M151 54h1M155 54h3M143 55h1M147 55h1M151 55h1M156 55h1M143 56h1M147 56h1M151 56h1M156 56h1M152 57h1M155 57h1M153 58h2M338 102h1M341 102h1M344 102h1M338 103h1M340 103h1M342 103h1M344 103h1M338 104h1M341 104h1M344 104h1M339 105h1M343 105h1M340 106h3M341 107h1M339 108h5M341 109h1M341 110h1M625 166h1M631 166h1M626 167h1M630 167h1M627 168h3M626 169h1M630 169h1M625 170h1M631 170h1M625 171h1M631 171h1M625 172h1M631 172h1M626 173h1M630 173h1M627 174h3M76 186h1M79 186h1M82 186h1M75 187h2M78 187h3M82 187h2M76 188h1M79 188h1M82 188h1M77 189h1M79 189h1M81 189h1M78 190h3M79 191h1M77 192h5M79 193h1M79 194h1M375 199h5M374 200h1M380 200h2M373 201h1M382 201h1M374 202h1M383 202h1M375 203h1M384 203h1M376 204h1M384 204h1M376 205h1M385 205h1M377 206h1M385 206h1M624 206h1M626 206h1M628 206h1M377 207h1M385 207h1M625 207h1M627 207h1M629 207h1M631 207h1M377 208h1M385 208h1M625 208h1M627 208h1M629 208h3M376 209h1M385 209h1M625 209h1M627 209h1M629 209h1M631 209h1M376 210h1M384 210h1M625 210h1M627 210h1M629 210h1M631 210h1M375 211h1M384 211h1M625 211h1M627 211h1M629 211h1M631 211h1M356 212h1M374 212h1M383 212h1M625 212h1M627 212h1M629 212h1M631 212h1M355 213h3M373 213h1M382 213h1M625 213h1M627 213h1M630 213h1M349 214h1M356 214h1M374 214h1M380 214h2M629 214h1M631 214h1M345 215h1M347 215h1M375 215h5M341 216h1M343 216h1M337 217h1M339 217h1M333 218h1M335 218h1M329 219h1M331 219h1M325 220h1M327 220h1M321 221h1M323 221h1M317 222h1M319 222h1M313 223h1M315 223h1M309 224h1M311 224h1M305 225h1M307 225h1M301 226h1M303 226h1M297 227h1M299 227h1M293 228h1M295 228h1M289 229h1M291 229h1M285 230h1M287 230h1M281 231h1M283 231h1M277 232h1M279 232h1M273 233h1M275 233h1M269 234h1M271 234h1M265 235h1M267 235h1M261 236h1M263 236h1M257 237h1M259 237h1M253 238h1M255 238h1M249 239h1M251 239h1M245 240h1M247 240h1M241 241h1M243 241h1M237 242h1M239 242h1M233 243h1M235 243h1M229 244h1M231 244h1M225 245h1M227 245h1M221 246h1M223 246h1M630 246h3M217 247h1M219 247h1M631 247h2M213 248h1M215 248h1M446 248h5M630 248h1M632 248h1M209 249h1M211 249h1M443 249h3M451 249h1M625 249h1M629 249h1M205 250h1M207 250h1M442 250h1M452 250h3M626 250h1M628 250h1M199 251h1M201 251h1M203 251h1M441 251h1M451 251h1M455 251h1M627 251h1M195 252h1M197 252h1M440 252h1M450 252h1M456 252h1M626 252h1M628 252h1M191 253h1M193 253h1M450 253h1M456 253h1M625 253h1M629 253h1M187 254h1M189 254h1M442 254h3M450 254h1M456 254h1M624 254h1M183 255h1M185 255h1M441 255h1M445 255h1M451 255h1M455 255h1M179 256h1M181 256h1M440 256h1M446 256h1M452 256h3M175 257h1M177 257h1M440 257h1M446 257h1M171 258h1M173 258h1M440 258h1M446 258h1M456 258h1M167 259h1M169 259h1M441 259h1M445 259h1M455 259h1M163 260h1M165 260h1M442 260h3M454 260h1M159 261h1M161 261h1M445 261h1M451 261h3M155 262h1M157 262h1M446 262h5M151 263h1M153 263h1M147 264h1M149 264h1M143 265h1M145 265h1M139 266h1M141 266h1M135 267h1M137 267h1M94 268h1M99 268h3M106 268h1M131 268h1M133 268h1M94 269h1M98 269h1M102 269h1M106 269h1M123 269h1M129 269h1M94 270h1M98 270h1M102 270h1M106 270h1M122 270h3M94 271h1M98 271h1M102 271h1M106 271h1M123 271h1M94 272h1M99 272h3M106 272h1M95 273h1M105 273h1M95 274h1M105 274h1M96 275h2M103 275h2M98 276h5M626 276h3M100 277h1M625 277h1M629 277h2M100 278h1M442 278h3M626 278h1M630 278h1M100 279h1M441 279h1M445 279h2M627 279h1M631 279h1M96 280h9M442 280h1M446 280h1M627 280h1M631 280h1M100 281h1M443 281h1M447 281h1M627 281h1M631 281h1M100 282h1M443 282h1M447 282h1M626 282h1M630 282h1M100 283h1M443 283h1M447 283h1M625 283h1M629 283h2M100 284h1M442 284h1M446 284h1M626 284h3M441 285h1M445 285h2M442 286h3M625 346h1M628 346h1M631 346h1M624 347h2M627 347h3M631 347h2M625 348h1M628 348h1M631 348h1M626 349h1M628 349h1M630 349h1M627 350h3M628 351h1M202 352h1M626 352h5M201 353h1M628 353h1M202 354h1M628 354h1M625 356h1M628 356h1M631 356h1M625 357h1M627 357h1M629 357h1M631 357h1M625 358h1M628 358h1M631 358h1M626 359h1M630 359h1M627 360h3M628 361h1M626 362h5M628 363h1M628 364h1M188 367h1M194 367h1M200 367h1M188 368h1M194 368h1M200 368h1M187 369h3M192 369h5M199 369h3M188 370h1M194 370h1M200 370h1M188 371h1M194 371h1M200 371h1M189 372h1M194 372h1M199 372h1M189 373h1M194 373h1M199 373h1M190 374h2M194 374h1M197 374h2M192 375h5M194 376h1M194 377h1M194 378h1M190 379h9M194 380h1M194 381h1M194 382h1M317 382h3M194 383h1M316 383h1M320 383h2M317 384h1M321 384h1M318 385h1M322 385h1M318 386h1M322 386h1M318 387h1M322 387h1M317 388h1M321 388h1M316 389h1M320 389h2M317 390h3M96 391h1M99 391h1M102 391h1M95 392h2M98 392h3M102 392h2M96 393h1M99 393h1M102 393h1M97 394h1M99 394h1M101 394h1M98 395h3M99 396h1M97 397h5M99 398h1M99 399h1M113 404h1M129 404h1M114 405h1M128 405h1M115 406h1M127 406h1M116 407h1M126 407h1M116 408h1M126 408h1M117 409h1M125 409h1M117 410h1M125 410h1M117 411h1M125 411h1M113 412h17M117 413h1M125 413h1M117 414h1M125 414h1M117 415h1M125 415h1M116 416h1M126 416h1M116 417h1M126 417h1M115 418h1M127 418h1M114 419h1M128 419h1M113 420h1M129 420h1"/>
<path stroke="#00ffff" d="M350 217h1M349 220h1M348 223h1M347 226h1M346 229h1M345 232h1M344 235h1M342 238h1M341 241h1M340 244h1M339 247h1M338 250h1M337 253h1M336 256h1M335 259h1M334 262h1M333 265h1M332 268h1M129 270h1M331 271h1M131 272h1M132 273h1M133 274h1M330 274h1M135 276h1M329 277h1M137 278h1M137 279h1M139 280h1M327 280h1M140 282h2M326 283h1M142 284h1M143 285h1M144 286h1M325 286h1M146 288h1M324 289h1M148 290h1M149 291h1M150 292h1M323 292h1M152 294h1M322 295h1M154 296h1M155 297h1M156 298h1M321 298h1M157 300h2M320 301h1M160 302h1M160 303h1M162 304h1M319 304h1M163 306h2M318 307h1M166 308h1M166 309h1M167 310h1M317 310h1M169 312h1M316 313h1M171 314h1M172 315h1M173 316h1M315 316h1M175 318h1M314 319h1M177 320h1M177 321h1M179 322h1M312 322h1M180 324h2M311 325h1M183 326h1M183 327h1M185 328h1M310 328h1M307 329h1M186 330h2M295 330h1M299 330h1M303 330h2M306 330h2M287 331h1M291 331h1M295 331h1M297 331h2M300 331h2M189 332h1M275 332h1M279 332h1M283 332h1M291 332h2M294 332h2M189 333h1M267 333h1M271 333h1M275 333h1M285 333h2M288 333h2M191 334h1M255 334h1M259 334h1M263 334h1M267 334h1M280 334h1M282 334h2M247 335h1M251 335h1M255 335h1M274 335h1M276 335h2M279 335h1M192 336h1M235 336h1M239 336h1M243 336h1M247 336h1M268 336h1M270 336h2M273 336h1M223 337h1M227 337h1M231 337h1M235 337h1M239 337h1M264 337h2M267 337h1M194 338h1M219 338h1M223 338h1M227 338h1M258 338h2M261 338h2M194 339h1M203 339h1M207 339h1M211 339h1M215 339h1M219 339h1M252 339h2M255 339h2M195 340h2M199 340h1M203 340h1M207 340h1M246 340h2M249 340h2M191 341h1M195 341h1M199 341h1M241 341h1M243 341h2M191 342h1M197 342h2M235 342h1M237 342h2M240 342h1M229 343h1M231 343h2M234 343h1M200 344h1M223 344h1M225 344h2M228 344h1M200 345h1M219 345h2M222 345h1M202 346h1M213 346h2M216 346h2M207 347h2M210 347h2M205 348h1"/>
</g>
<text class="h" transform="translate(83.5,304) scale(0.85,1)" fill="#ff0000">1</text>
<text class="h" transform="translate(162.5,393) scale(0.85,1)" fill="#ffff00">2</text>
<text class="h" transform="translate(261.5,410) scale(0.85,1)" fill="#00ff00">3</text>
<text class="h" transform="translate(334.5,382) scale(0.85,1)" fill="#0000ff">4</text>
<text class="h" transform="translate(379.5,336) scale(0.85,1)" fill="#ff0000">5</text>
<text class="h" transform="translate(403.5,277) scale(0.85,1)" fill="#ffff00">6</text>
<text class="h" transform="translate(395.5,184) scale(0.85,1)" fill="#00ff00">7</text>
<text class="h" transform="translate(316.5,95) scale(0.85,1)" fill="#0000ff">8</text>
<text class="h" transform="translate(217.5,78) scale(0.85,1)" fill="#ff0000">9</text>
<text class="h" transform="translate(145.5,106) scale(0.85,1)" letter-spacing="2.4" fill="#ffff00">10</text>
<text class="h" transform="translate(100.5,152) scale(0.85,1)" letter-spacing="2.4" fill="#00ff00">11</text>
<text class="h" transform="translate(76.5,211) scale(0.85,1)" letter-spacing="2.4" fill="#0000ff">12</text>
</svg>
<div id="side">
<div class="t" style="top:6.87px"><span class="cw">Astrolog 5.41G</span></div>
<div class="t" style="top:16.87px"><span class="cl">Chart of the Moment</span></div>
<div class="t" style="top:26.87px"><span class="cw">Sat February 28, 2026</span></div>
<div class="t" style="top:36.87px"><span class="cw"> 4:16:00am (ST -8:00 GMT)</span></div>
<div class="t" style="top:46.87px"><span class="cl">San Francisco, CA</span></div>
<div class="t" style="top:56.87px"><span class="cl">122°41'00"W 37°79'00"N</span></div>
<div class="t" style="top:66.87px"><span class="cl">Placidus houses.</span></div>
<div class="t" style="top:76.87px"><span class="cl">Tropical, Geocentric.</span></div>
<div class="t" style="top:86.87px"><span class="cw">Julian Day = 2461100.0111</span></div>
<div class="t" style="top:96.87px"><span class="cl">Obliquity = 23°26'09"</span></div>
<div class="t" style="top:106.87px"><span class="cl">Sidereal time: 14:38:36</span></div>
<div class="t" style="top:116.87px"><span class="cl">DeltaT =  95.4121</span></div>
<div class="t" style="top:136.87px"><span class="cr"> 1st house: </span><span class="cy">19Cap24</span></div>
<div class="t" style="top:146.87px"><span class="cy"> 2nd house: </span><span class="cb"> 1Pis52</span></div>
<div class="t" style="top:156.87px"><span class="cG"> 3rd house: </span><span class="cr">11Ari50</span></div>
<div class="t" style="top:166.87px"><span class="cb"> 4th house: </span><span class="cy">12Tau05</span></div>
<div class="t" style="top:176.87px"><span class="cr"> 5th house: </span><span class="cG"> 5Gem36</span></div>
<div class="t" style="top:186.87px"><span class="cy"> 6th house: </span><span class="cG">26Gem38</span></div>
<div class="t" style="top:196.87px"><span class="cG"> 7th house: </span><span class="cb">19Can24</span></div>
<div class="t" style="top:206.87px"><span class="cb"> 8th house: </span><span class="cy"> 1Vir52</span></div>
<div class="t" style="top:216.87px"><span class="cr"> 9th house: </span><span class="cG">11Lib50</span></div>
<div class="t" style="top:226.87px"><span class="cy">10th house: </span><span class="cb">12Sco05</span></div>
<div class="t" style="top:236.87px"><span class="cG">11th house: </span><span class="cr"> 5Sag36</span></div>
<div class="t" style="top:246.87px"><span class="cb">12th house: </span><span class="cr">26Sag38</span></div>
<div class="t" style="top:266.87px"><span class="cr"> Sun: </span><span class="cb"> 9Pis55</span><span class="cw"> </span><span class="cl"> + 0°00'</span></div>
<div class="t" style="top:276.87px"><span class="cb">Moon: </span><span class="cr"> 2Leo19</span><span class="cw"> </span><span class="cl"> + 3°10'</span></div>
<div class="t" style="top:286.87px"><span class="cG">Merc: </span><span class="cb">22Pis10</span><span class="cw">R</span><span class="cl"> + 3°13'</span></div>
<div class="t" style="top:296.87px"><span class="cy">Venu: </span><span class="cb">22Pis36</span><span class="cw"> </span><span class="cl"> - 1°22'</span></div>
<div class="t" style="top:306.87px"><span class="cr">Mars: </span><span class="cG">28Aqu22</span><span class="cw"> </span><span class="cl"> - 1°06'</span></div>
<div class="t" style="top:316.87px"><span class="cr">Jupi: </span><span class="cb">15Can16</span><span class="cw">R</span><span class="cl"> + 0°21'</span></div>
<div class="t" style="top:326.87px"><span class="cy">Satu: </span><span class="cr"> 1Ari40</span><span class="cw"> </span><span class="cl"> - 2°08'</span></div>
<div class="t" style="top:336.87px"><span class="cG">Uran: </span><span class="cy">27Tau43</span><span class="cw"> </span><span class="cl"> - 0°11'</span></div>
<div class="t" style="top:346.87px"><span class="cb">Nept: </span><span class="cr"> 1Ari02</span><span class="cw"> </span><span class="cl"> - 1°18'</span></div>
<div class="t" style="top:356.87px"><span class="cb">Plut: </span><span class="cG"> 4Aqu31</span><span class="cw"> </span><span class="cl"> - 3°52'</span></div>
<div class="t" style="top:376.87px"><span class="cl">Fire: 3, Earth: 1,</span></div>
<div class="t" style="top:386.87px"><span class="cl">Air : 2, Water: 4</span></div>
<div class="t" style="top:396.87px"><span class="cl">Car: 3, Fix: 4, Mut: 3</span></div>
<div class="t" style="top:406.87px"><span class="cl">Yang: 5, Yin: 5</span></div>
<div class="t" style="top:416.87px"><span class="cl">M: 1, N: 9, A: 7, D: 3</span></div>
<div class="t" style="top:426.87px"><span class="cl">Ang: 4, Suc: 5, Cad: 1</span></div>
<div class="t" style="top:436.87px"><span class="cl">Learn: 5, Share: 5</span></div>
</div>
</body></html>
